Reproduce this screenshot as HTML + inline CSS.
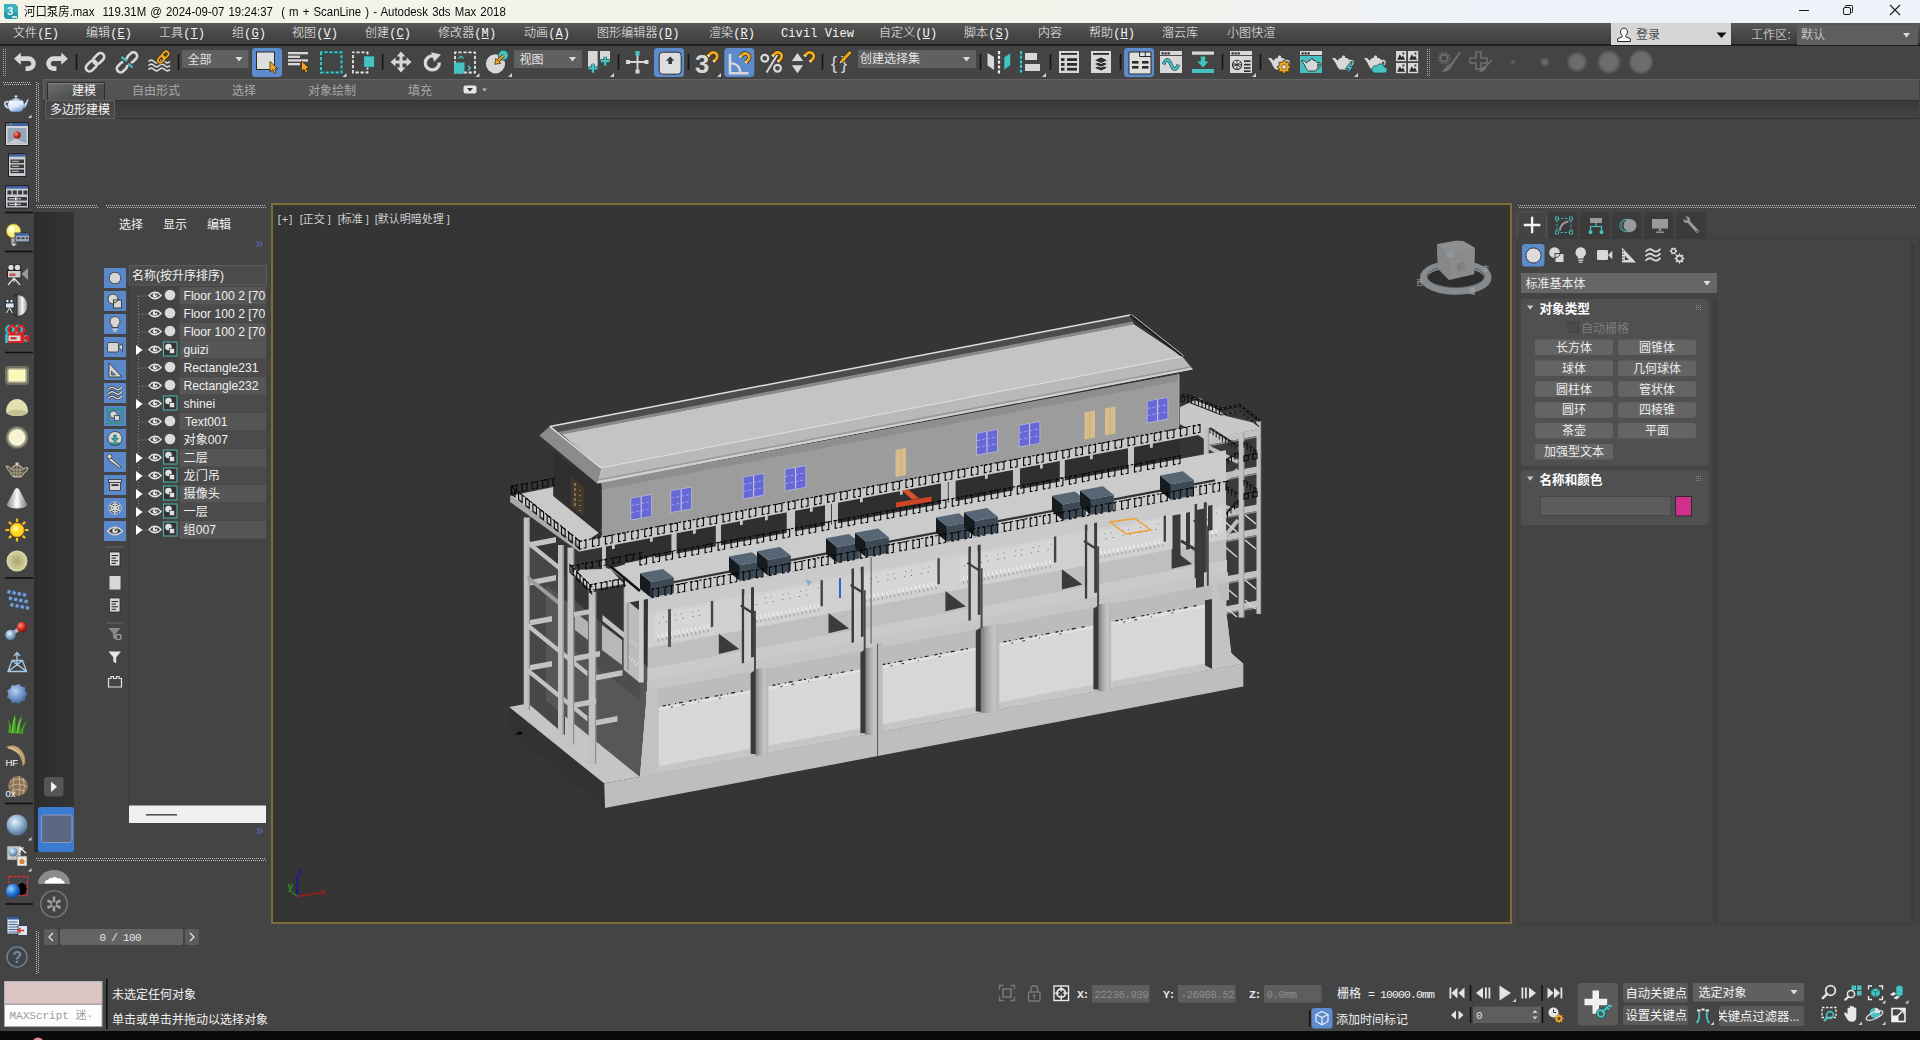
<!DOCTYPE html>
<html lang="zh-CN"><head><meta charset="utf-8"><title>河口泵房.max - Autodesk 3ds Max 2018</title>
<style>
*{box-sizing:border-box;margin:0;padding:0}
html,body{width:1920px;height:1040px;overflow:hidden;background:#444;}
body{position:relative;font-family:"Liberation Sans","Noto Sans CJK SC",sans-serif;font-size:12px;color:#e6e6e6;line-height:1}
.a{position:absolute}
.t{position:absolute;white-space:nowrap}
svg{position:absolute;overflow:visible}
#title{left:0;top:0;width:1920px;height:23px;background:linear-gradient(90deg,#f3f3e8 0%,#f3f3ea 50%,#f2f2ee 62%,#eef2f8 77%,#eff3f9 100%);color:#111}
#menu{left:0;top:23px;width:1920px;height:23px;background:linear-gradient(180deg,#585858 0%,#4a4a4a 45%,#3d3d3d 100%);border-bottom:2px solid #1e1e1e}
#menu .t{top:5px;font-size:12px;color:#f4f4f4;letter-spacing:.1px;font-weight:300}
.mono{font-family:"Liberation Mono","Noto Sans CJK SC",monospace}
.dots-h{height:3px;background:repeating-linear-gradient(90deg,#bdbdbd 0 1px,transparent 1px 2px) 0 0/100% 1px no-repeat,repeating-linear-gradient(90deg,transparent 0 1px,#bdbdbd 1px 2px) 0 2px/100% 1px no-repeat}
.dots-v{width:3px;background:repeating-linear-gradient(180deg,#bdbdbd 0 1px,transparent 1px 2px) 0 0/1px 100% no-repeat,repeating-linear-gradient(180deg,transparent 0 1px,#bdbdbd 1px 2px) 2px 0/1px 100% no-repeat}
</style></head><body>
<!-- TITLE BAR -->
<div id="title" class="a">
<svg style="left:3px;top:3px" width="16" height="17" viewBox="0 0 16 17"><path d="M1 1h11l3 3v11l-2 1H3l-2-2z" fill="#2a9aa6"/><path d="M1 1h11l3 3v5H1z" fill="#3bb3be"/><text x="4" y="11.5" font-family="Liberation Sans,sans-serif" font-weight="bold" font-size="11" fill="#e8f6f8">3</text><rect x="9" y="13" width="5" height="2" fill="#bfe6ea"/></svg>
<div class="t" id="ttl" style="left:24px;top:6px;font-size:12px;color:#0a0a0a;word-spacing:1px;transform:scaleX(.951);transform-origin:0 0">河口泵房.max&nbsp; 119.31M @ 2024-09-07 19:24:37&nbsp; ( m + ScanLine ) - Autodesk 3ds Max 2018</div>
<svg style="left:1797px;top:4px" width="110" height="14" viewBox="0 0 110 14" fill="none" stroke="#1a1a1a" stroke-width="1"><path d="M2 6.5h10"/><rect x="46.5" y="3.5" width="7" height="7" rx="1.5"/><path d="M48.5 3.5v-1.2q0-.8.8-.8h5.4q.8 0 .8.8v5.4q0 .8-.8.8h-1.2"/><path d="M93 1l10 10M103 1l-10 10" stroke-width="1.1"/></svg>
</div>
<!-- MENU BAR -->
<div id="menu" class="a mono">
<div class="t" style="left:13px">文件(<u>F</u>)</div>
<div class="t" style="left:86px">编辑(<u>E</u>)</div>
<div class="t" style="left:159px">工具(<u>T</u>)</div>
<div class="t" style="left:232px">组(<u>G</u>)</div>
<div class="t" style="left:292px">视图(<u>V</u>)</div>
<div class="t" style="left:365px">创建(<u>C</u>)</div>
<div class="t" style="left:438px">修改器(<u>M</u>)</div>
<div class="t" style="left:524px">动画(<u>A</u>)</div>
<div class="t" style="left:597px">图形编辑器(<u>D</u>)</div>
<div class="t" style="left:709px">渲染(<u>R</u>)</div>
<div class="t" style="left:781px">Civil View</div>
<div class="t" style="left:879px">自定义(<u>U</u>)</div>
<div class="t" style="left:964px">脚本(<u>S</u>)</div>
<div class="t" style="left:1038px">内容</div>
<div class="t" style="left:1089px">帮助(<u>H</u>)</div>
<div class="t" style="left:1162px">溜云库</div>
<div class="t" style="left:1227px">小图快渲</div>
<div class="a" style="left:1611px;top:0;width:120px;height:22px;background:#d6d6d6"></div>
<svg style="left:1615px;top:4px" width="18" height="16" viewBox="0 0 18 16"><path d="M9 1.2c2.2 0 3.4 1.6 3.4 3.8 0 1.6-.7 3-1.6 3.7v1.1l4.6 2v2.7H2.600v-2.700l4.600-2v-1.100C6.300 8 5.600 6.600 5.600 5 5.600 2.800 6.800 1.200 9 1.200z" fill="#fff" stroke="#222" stroke-width="1"/></svg>
<div class="t" style="left:1636px;top:6px;color:#000;font-family:'Liberation Sans','Noto Sans CJK SC',sans-serif">登录</div>
<svg style="left:1716px;top:9px" width="12" height="7"><path d="M0.500 0.500h10l-5 5.500z" fill="#111"/></svg>
<div class="t" style="left:1751px;top:6px;font-family:'Liberation Sans','Noto Sans CJK SC',sans-serif;color:#e8e8e8">工作区:</div>
<div class="a" style="left:1797px;top:2px;width:121px;height:20px;background:#5e5e5e"></div>
<div class="t" style="left:1801px;top:6px;font-family:'Liberation Sans','Noto Sans CJK SC',sans-serif;color:#e0e0e0">默认</div>
<svg style="left:1903px;top:10px" width="8" height="5"><path d="M0 0h7l-3.500 4.500z" fill="#ddd"/></svg>
</div>
<!-- MAIN TOOLBAR -->
<div id="tb" class="a" style="left:0;top:46px;width:1920px;height:33px;background:#444"></div>
<!-- RIBBON -->
<div class="a" style="left:43px;top:79px;width:1876px;height:21px;background:#535353;border-top:1px solid #626262;border-left:1px solid #626262"></div>
<div class="a" style="left:43px;top:100px;width:1876px;height:19px;background:linear-gradient(180deg,#3a3a3a,#434343);border-top:1px solid #2e2e2e;border-bottom:1px solid #333"></div>
<div class="a" style="left:47px;top:82px;width:58px;height:18px;background:linear-gradient(160deg,#6e6e6e,#4c4c4c 70%);border:1px solid #2c2c2c;border-bottom:none;border-radius:2px 2px 0 0;box-shadow:inset 0 1px 0 #808080"></div>
<div class="t" style="left:72px;top:85px;color:#f0f0f0">建模</div>
<div class="t" style="left:132px;top:85px;color:#a8a8a8">自由形式</div>
<div class="t" style="left:232px;top:85px;color:#a8a8a8">选择</div>
<div class="t" style="left:308px;top:85px;color:#a8a8a8">对象绘制</div>
<div class="t" style="left:408px;top:85px;color:#a8a8a8">填充</div>
<svg style="left:463px;top:85px" width="26" height="10"><rect x="0.500" y="0.500" width="13" height="8" rx="2" fill="#e6e6e6"/><path d="M4 3h6l-3 3.500z" fill="#333"/><path d="M19 3.500h5l-2.500 3z" fill="#bbb"/></svg>
<div class="a" style="left:45px;top:100px;width:70px;height:19px;background:#484848;border:1px solid #5e5e5e"></div>
<div class="t" style="left:50px;top:104px;color:#f4f4f4">多边形建模</div>
<svg style="left:0;top:44px" width="1920" height="38" viewBox="0 44 1920 38">
<defs>
<path id="tp" d="M0,3.500 L3.200,3.500 L5.600,6.200 C6.200,4.600 8,3.400 10,3.200 L10,2 C10,0.800 13,0.800 13,2 L13,3.200 C15.400,3.400 17,4.600 17.600,5.800 C20,4.600 22.200,6 21.700,8.600 C21.200,11 19.200,12 17.600,12 C17.100,13.500 16.200,14.500 15.200,15 L7.600,15 C5.600,13.500 4.600,11 3.600,8.600 Z M18,7.200 C18.300,8.500 18.300,9.500 18,10.600 C19.600,10.400 20.600,9.200 20.500,8 C20.400,7 19.200,6.700 18,7.200Z" fill-rule="evenodd"/>
<g id="mag"><path d="M6.400,11.200 L9.300,8.300 A3.900,3.900 0 0 0 3.800,2.800 L0.900,5.700" fill="none" stroke="#3a2a08" stroke-width="4.200"/><path d="M6.400,11.200 L9.300,8.300 A3.900,3.900 0 0 0 3.800,2.800 L0.900,5.700" fill="none" stroke="#f2a922" stroke-width="2.800"/><path d="M6.400,11.200 l0.900,-0.900 M0.900,5.700 l0.900,-0.900" stroke="#f6e6c0" stroke-width="2.800"/></g>
<path id="cur" d="M0,0 L0,10.500 L2.600,8.200 L4.400,12 L6.400,11.100 L4.600,7.400 L8,7.400 Z" fill="#f2a922" stroke="#3a2a08" stroke-width="0.800"/>
<path id="fly" d="M4,0 V4 H0 Z" fill="#d0d0d0"/>
<filter id="bl1"><feGaussianBlur stdDeviation="0.800"/></filter><filter id="bl2"><feGaussianBlur stdDeviation="1.600"/></filter>
</defs>
<line x1="3.5" y1="49" x2="3.5" y2="76" stroke="#a0a0a0" stroke-width="1" stroke-dasharray="1 1"/>
<line x1="5.5" y1="49" x2="5.5" y2="76" stroke="#a0a0a0" stroke-width="1" stroke-dasharray="1 1"/>
<rect x="75.7" y="54" width="1.600" height="16" fill="#151515"/>
<rect x="177.7" y="54" width="1.600" height="16" fill="#151515"/>
<rect x="381.8" y="54" width="1.600" height="16" fill="#151515"/>
<rect x="617.7" y="54" width="1.600" height="16" fill="#151515"/>
<rect x="687.7" y="54" width="1.600" height="16" fill="#151515"/>
<rect x="821.7" y="54" width="1.600" height="16" fill="#151515"/>
<rect x="979.7" y="54" width="1.600" height="16" fill="#151515"/>
<rect x="1049.7" y="54" width="1.600" height="16" fill="#151515"/>
<rect x="1119.7" y="54" width="1.600" height="16" fill="#151515"/>
<rect x="1221.7" y="54" width="1.600" height="16" fill="#151515"/>
<rect x="1259.7" y="54" width="1.600" height="16" fill="#151515"/>
<path d="M20.200,58.600 H28.500 A5,5 0 0 1 28.500,68.600 H25.600" fill="none" stroke="#d8d8d8" stroke-width="4.600"/><path d="M14,58.700 L20.800,52.600 V64.800 Z" fill="#d8d8d8"/>
<path d="M61.800,58.600 H53.500 A5,5 0 0 0 53.500,68.600 H56.400" fill="none" stroke="#d8d8d8" stroke-width="4.600"/><path d="M68,58.700 L61.200,52.600 V64.800 Z" fill="#d8d8d8"/>
<rect x="85.05" y="62.25" width="12.5" height="7.5" rx="3.75" fill="none" stroke="#d8d8d8" stroke-width="2.6" transform="rotate(-45 91.3 66)"/>
<rect x="92.45" y="54.85" width="12.5" height="7.5" rx="3.75" fill="none" stroke="#d8d8d8" stroke-width="2.6" transform="rotate(-45 98.7 58.6)"/>
<rect x="116.25" y="63.45" width="11.5" height="7.5" rx="3.75" fill="none" stroke="#d8d8d8" stroke-width="2.6" transform="rotate(-45 122 67.2)"/>
<rect x="126.25" y="53.65" width="11.5" height="7.5" rx="3.75" fill="none" stroke="#d8d8d8" stroke-width="2.6" transform="rotate(-45 132 57.4)"/>
<path d="M123.500,63 L130.500,61.500" stroke="#444" stroke-width="5"/>
<path d="M121.500,57 L127,61 M128,63.500 L132.500,67.500" stroke="#46c2c2" stroke-width="2.200"/>
<path d="M148.500,61.5 q2.700,-2.600 5.400,0 t5.400,0 t5.400,0 t5.300,0" fill="none" stroke="#d8d8d8" stroke-width="1.700"/>
<path d="M148.500,65.5 q2.700,-2.600 5.400,0 t5.400,0 t5.400,0 t5.300,0" fill="none" stroke="#d8d8d8" stroke-width="1.700"/>
<path d="M148.500,69.5 q2.700,-2.600 5.400,0 t5.400,0 t5.400,0 t5.300,0" fill="none" stroke="#d8d8d8" stroke-width="1.700"/>
<rect x="157.45" y="56.7" width="7.5" height="5" rx="2.5" fill="none" stroke="#3a2a08" stroke-width="3.4" transform="rotate(-45 161.2 59.2)"/>
<rect x="161.55" y="52.3" width="7.5" height="5" rx="2.5" fill="none" stroke="#3a2a08" stroke-width="3.4" transform="rotate(-45 165.3 54.8)"/>
<rect x="157.45" y="56.7" width="7.5" height="5" rx="2.5" fill="none" stroke="#f2a922" stroke-width="1.8" transform="rotate(-45 161.2 59.2)"/>
<rect x="161.55" y="52.3" width="7.5" height="5" rx="2.5" fill="none" stroke="#f2a922" stroke-width="1.8" transform="rotate(-45 165.3 54.8)"/>
<rect x="182" y="50" width="66.5" height="18" fill="#606060"/>
<text x="187.5" y="63.5" font-size="12" fill="#e4e4e4" font-family="Liberation Sans,Noto Sans CJK SC,sans-serif">全部</text>
<path d="M235.5,57 h7 l-3.500,4.500 z" fill="#dcdcdc"/>
<rect x="514" y="50" width="68" height="18" fill="#606060"/>
<text x="519.5" y="63.5" font-size="12" fill="#e4e4e4" font-family="Liberation Sans,Noto Sans CJK SC,sans-serif">视图</text>
<path d="M569.0,57 h7 l-3.500,4.500 z" fill="#dcdcdc"/>
<rect x="858" y="50" width="118" height="18" fill="#606060"/>
<text x="860" y="62.5" font-size="12" fill="#e4e4e4" font-family="Liberation Sans,Noto Sans CJK SC,sans-serif">创建选择集</text>
<path d="M963.0,57 h7 l-3.500,4.500 z" fill="#dcdcdc"/>
<rect x="252" y="48" width="30" height="29" rx="3.500" fill="#5d8ccc"/>
<rect x="654" y="48" width="30" height="29" rx="3.500" fill="#5d8ccc"/>
<rect x="724.3" y="48" width="30" height="29" rx="3.500" fill="#5d8ccc"/>
<rect x="1124" y="48" width="30" height="29" rx="3.500" fill="#5d8ccc"/>
<rect x="256.500" y="52" width="18" height="17.500" fill="#dedede" stroke="#2b2b2b" stroke-width="1"/><use href="#cur" x="270" y="61.500"/>
<rect x="288" y="52" width="20" height="2.300" fill="#d8d8d8"/>
<rect x="288" y="55.6" width="12" height="2.300" fill="#d8d8d8"/>
<rect x="288" y="59.3" width="20" height="2.300" fill="#d8d8d8"/>
<rect x="288" y="63" width="12" height="2.300" fill="#d8d8d8"/>
<use href="#cur" x="301.500" y="61"/>
<rect x="321" y="52.300" width="20.500" height="20.200" fill="none" stroke="#1f4f4f" stroke-width="3"/><rect x="321" y="52.300" width="20.500" height="20.200" fill="none" stroke="#46c2c2" stroke-width="2" stroke-dasharray="3.200 1.800" stroke-dashoffset="1.600"/>
<use href="#fly" x="342.500" y="73"/>
<rect x="353" y="52.300" width="14.500" height="20.200" fill="none" stroke="#e6e6e6" stroke-width="1.800" stroke-dasharray="3.200 1.800" stroke-dashoffset="1.600"/><rect x="363.800" y="56" width="10.600" height="11.200" fill="#46c2c2" stroke="#245" stroke-width="0.600"/>
<path d="M401,51.500 l4.400,5 h-2.900 v4 h4 v-2.900 l5,4.400 l-5,4.400 v-2.900 h-4 v4 h2.900 l-4.400,5 l-4.400,-5 h2.900 v-4 h-4 v2.900 l-5,-4.400 l5,-4.400 v2.900 h4 v-4 h-2.900 z" fill="#d8d8d8"/>
<path d="M439.300,62.500 A7,7 0 1 1 433.500,56" fill="none" stroke="#d8d8d8" stroke-width="3.300"/><path d="M432.500,50.800 L441.200,56.200 L432.500,61 Z" fill="#d8d8d8" transform="rotate(-18 436 56)"/>
<rect x="455" y="52.300" width="20" height="20.200" fill="none" stroke="#e6e6e6" stroke-width="1.800" stroke-dasharray="3.200 1.800" stroke-dashoffset="1.600"/><rect x="454" y="62.500" width="10.500" height="11" fill="#46c2c2"/><path d="M458.500,58.500 l2.500,-2.300 l2.500,2.300 M468,65.500 l2.300,2.500 l-2.300,2.500" stroke="#46c2c2" stroke-width="1.400" fill="none"/>
<use href="#fly" x="475.500" y="73"/>
<circle cx="495.500" cy="63.800" r="9.600" fill="#d8d8d8"/><circle cx="503.300" cy="55.200" r="5" fill="#46c2c2" stroke="#1f4f4f" stroke-width="0.800"/><path d="M503.500,55.500 L497.500,61.500" stroke="#3a2a08" stroke-width="3.200"/><path d="M503.500,55.500 L497.500,61.500" stroke="#f2a922" stroke-width="2"/><path d="M494.800,64.300 L495.800,58.300 L500.800,63.300 Z" fill="#f2a922" stroke="#3a2a08" stroke-width="0.700"/>
<use href="#fly" x="508" y="73"/>
<rect x="588" y="51" width="9.600" height="16" fill="#d8d8d8"/><rect x="600" y="51" width="10" height="8.500" fill="#d8d8d8"/><path d="M588.5,68.3 h9.0 M593,63.8 v9.0" stroke="#1f4f4f" stroke-width="3.4000000000000004"/><path d="M588.5,68.3 h9.0 M593,63.8 v9.0" stroke="#46c2c2" stroke-width="2.2"/><path d="M600.7,61.2 h9.0 M605.2,56.7 v9.0" stroke="#1f4f4f" stroke-width="3.4000000000000004"/><path d="M600.7,61.2 h9.0 M605.2,56.7 v9.0" stroke="#46c2c2" stroke-width="2.2"/>
<use href="#fly" x="610" y="73"/>
<path d="M627,62 h21 M637.500,52.500 v20" stroke="#d8d8d8" stroke-width="1.800"/><rect x="626" y="60" width="4" height="4" fill="#d8d8d8"/><rect x="644.500" y="60" width="4" height="4" fill="#d8d8d8"/><rect x="635.500" y="69.500" width="4" height="4" fill="#d8d8d8"/><rect x="635.300" y="51" width="4.400" height="4.400" fill="#46c2c2"/>
<rect x="659.200" y="52.200" width="22" height="22" rx="3.500" fill="#dedede" stroke="#2b2b2b" stroke-width="1"/><path d="M670.200,56.500 l4.300,4.300 h-2.500 v3.200 h-3.600 v-3.200 h-2.500 z" fill="#3a3a3a"/>
<text x="695" y="72.800" font-family="Liberation Sans,sans-serif" font-weight="bold" font-size="25.500" fill="#d8d8d8">3</text><use href="#mag" x="707" y="50.500"/><use href="#fly" x="717" y="73"/>
<path d="M730,54 V73.200 H748.500" fill="none" stroke="#d8d8d8" stroke-width="2.600"/><path d="M731,63.300 A9,9 0 0 1 740.300,72.500" fill="none" stroke="#d8d8d8" stroke-width="2.200"/><use href="#mag" x="739" y="51.500"/>
<circle cx="764.800" cy="58.300" r="3.400" fill="none" stroke="#d8d8d8" stroke-width="2.200"/><circle cx="777.500" cy="68.300" r="3.400" fill="none" stroke="#d8d8d8" stroke-width="2.200"/><path d="M766.500,72.500 L777.500,54.500" stroke="#d8d8d8" stroke-width="2"/><use href="#mag" x="771.500" y="50.500"/>
<path d="M797.500,53 l5.600,8 h-11.200 z M797.500,73.300 l5.600,-8 h-11.200 z" fill="#d8d8d8"/><use href="#mag" x="803.500" y="50.500"/>
<text x="831" y="68.500" font-family="Liberation Sans,sans-serif" font-size="18" fill="#d8d8d8">{</text><text x="841" y="68.500" font-family="Liberation Sans,sans-serif" font-size="18" fill="#d8d8d8">}</text><path d="M840.500,62.500 L850.500,52" stroke="#3a2a08" stroke-width="4"/><path d="M841.500,61.500 L850.500,52" stroke="#f2a922" stroke-width="2.800"/><path d="M839.800,63.300 l0.600,-2.600 l2,2 z" fill="#f5d9a0"/>
<path d="M987.500,53 L994,57 V70 L987.500,65.500 Z" fill="#d8d8d8"/><path d="M1010.500,53 L1004,57 V70 L1010.500,65.500 Z" fill="#46c2c2" stroke="#1f4f4f" stroke-width="0.600"/><path d="M999,51 V73.500" stroke="#eee" stroke-width="2.200" stroke-dasharray="3.200 1.600"/>
<path d="M1021,51 V73.500" stroke="#1f4f4f" stroke-width="3.200"/><path d="M1021,51 V73.500" stroke="#46c2c2" stroke-width="2.200" stroke-dasharray="3.200 1.400"/><rect x="1025" y="53" width="12" height="7" fill="#d8d8d8"/><rect x="1025" y="64" width="15" height="7" fill="#d8d8d8"/><use href="#fly" x="1042" y="73"/>
<rect x="1059" y="51" width="20" height="22" fill="#d8d8d8"/><rect x="1061" y="53" width="16" height="1.800" fill="#2b2b2b"/>
<rect x="1061" y="58.2" width="3.500" height="2.800" fill="#2b2b2b"/><rect x="1067" y="58.2" width="10" height="2.800" fill="#2b2b2b"/>
<rect x="1061" y="63" width="3.500" height="2.800" fill="#2b2b2b"/><rect x="1067" y="63" width="10" height="2.800" fill="#2b2b2b"/>
<rect x="1061" y="67.8" width="3.500" height="2.800" fill="#2b2b2b"/><rect x="1067" y="67.8" width="10" height="2.800" fill="#2b2b2b"/>
<rect x="1091" y="51" width="20" height="22" fill="#d8d8d8"/><rect x="1093" y="53" width="16" height="1.800" fill="#2b2b2b"/>
<path d="M1101,64.5 l7,3.300 l-7,3.300 l-7,-3.300 z" fill="#2b2b2b" stroke="#d8d8d8" stroke-width="1"/>
<path d="M1101,60.7 l7,3.300 l-7,3.300 l-7,-3.300 z" fill="#2b2b2b" stroke="#d8d8d8" stroke-width="1"/>
<path d="M1101,56.900000000000006 l7,3.300 l-7,3.300 l-7,-3.300 z" fill="#2b2b2b" stroke="#d8d8d8" stroke-width="1"/>
<path d="M1129,52 H1151 V74 H1129 Z" fill="#dedede" stroke="#2b2b2b" stroke-width="1"/><path d="M1139.500,52 V56.500 H1151 M1145.300,52 V56.500" stroke="#2b2b2b" stroke-width="1" fill="none"/>
<rect x="1132" y="61" width="6.500" height="2.600" fill="#2b2b2b"/>
<rect x="1132" y="66" width="6.500" height="2.600" fill="#2b2b2b"/>
<rect x="1142" y="61" width="6.500" height="2.600" fill="#2b2b2b"/>
<rect x="1142" y="66" width="6.500" height="2.600" fill="#2b2b2b"/>
<rect x="1160" y="51" width="22" height="22" fill="#d8d8d8"/><rect x="1160" y="51" width="22" height="4.500" fill="#d8d8d8"/><rect x="1160" y="55.200" width="22" height="0.800" fill="#2b2b2b"/>
<rect x="1161.5" y="52.300" width="2.200" height="2.200" fill="#2b2b2b"/>
<rect x="1164.5" y="52.300" width="2.200" height="2.200" fill="#2b2b2b"/>
<rect x="1167.5" y="52.300" width="2.200" height="2.200" fill="#2b2b2b"/>
<path d="M1163.500,64.500 c2.500,-6 5,-6 7.500,0 s5,6 7.500,0" fill="none" stroke="#1f4f4f" stroke-width="3.400"/><path d="M1163.500,64.500 c2.500,-6 5,-6 7.500,0 s5,6 7.500,0" fill="none" stroke="#46c2c2" stroke-width="2"/>
<rect x="1192" y="51.500" width="22" height="3.200" fill="#d8d8d8"/><rect x="1192" y="69" width="22" height="4" fill="#46c2c2"/><path d="M1200.800,56.500 h4.400 v5 h3.300 l-5.500,6 l-5.500,-6 h3.300 z" fill="#46c2c2"/>
<rect x="1230" y="51" width="22" height="22" fill="#d8d8d8"/><rect x="1230" y="51" width="22" height="4.500" fill="#d8d8d8"/><rect x="1230" y="55.200" width="22" height="0.800" fill="#2b2b2b"/>
<rect x="1231.5" y="52.300" width="2.200" height="2.200" fill="#2b2b2b"/>
<rect x="1234.5" y="52.300" width="2.200" height="2.200" fill="#2b2b2b"/>
<rect x="1237.5" y="52.300" width="2.200" height="2.200" fill="#2b2b2b"/>
<circle cx="1237" cy="64.800" r="4.600" fill="#f2f2f2" stroke="#2b2b2b" stroke-width="1.100"/><path d="M1233,62.500 l8,5 M1233,67 l8,-5 M1237,60.300 v9.200 M1232.500,64.800 h9.200" stroke="#2b2b2b" stroke-width="0.900"/>
<rect x="1244" y="60.3" width="6.500" height="1.600" fill="#2b2b2b"/>
<rect x="1244" y="63.8" width="6.500" height="1.600" fill="#2b2b2b"/>
<rect x="1244" y="67.2" width="6.500" height="1.600" fill="#2b2b2b"/>
<rect x="1244" y="70.4" width="6.500" height="1.600" fill="#2b2b2b"/>
<use href="#fly" x="1252" y="73"/>
<use href="#tp" x="1268" y="54.500" fill="#d8d8d8"/>
<polygon points="1290.6,66.3 1290.6,67.7 1288.8,68.4 1288.4,69.4 1289.2,71.1 1288.1,72.2 1286.4,71.4 1285.4,71.8 1284.7,73.6 1283.3,73.6 1282.6,71.8 1281.6,71.4 1279.9,72.2 1278.8,71.1 1279.6,69.4 1279.2,68.4 1277.4,67.7 1277.4,66.3 1279.2,65.6 1279.6,64.6 1278.8,62.9 1279.9,61.8 1281.6,62.6 1282.6,62.2 1283.3,60.4 1284.7,60.4 1285.4,62.2 1286.4,62.6 1288.1,61.8 1289.2,62.9 1288.4,64.6 1288.8,65.6" fill="#f2a922" stroke="#3a2a08" stroke-width="0.800"/><circle cx="1284" cy="67" r="2.300" fill="#e8e8e8" stroke="#3a2a08" stroke-width="0.600"/>
<rect x="1300" y="51" width="22" height="22" fill="#46c2c2"/><rect x="1300" y="51" width="22" height="4.500" fill="#d8d8d8"/><rect x="1300" y="55.200" width="22" height="0.800" fill="#2b2b2b"/>
<rect x="1301.5" y="52.300" width="2.200" height="2.200" fill="#2b2b2b"/>
<rect x="1304.5" y="52.300" width="2.200" height="2.200" fill="#2b2b2b"/>
<rect x="1307.5" y="52.300" width="2.200" height="2.200" fill="#2b2b2b"/>
<use href="#tp" x="1301.500" y="57.500" fill="#d8d8d8" stroke="#2b2b2b" stroke-width="1" transform="translate(1301.500 57.500) scale(0.9) translate(-1301.500 -57.500)"/>
<use href="#tp" x="1332" y="54.500" fill="#d8d8d8"/><path d="M1351,61.500 l-5.500,7 h3.200 l-1.800,6 l6.300,-8 h-3.300 l2.600,-5 z" fill="#46c2c2" stroke="#1f4f4f" stroke-width="0.800"/><use href="#fly" x="1354" y="73"/>
<use href="#tp" x="1364" y="54.500" fill="#d8d8d8"/><path d="M1374.500,73 h9.500 a3,3 0 0 0 0.300,-6 a4,4 0 0 0 -7.500,-1 a3.600,3.600 0 0 0 -2.300,7 z" fill="#46c2c2" stroke="#1f4f4f" stroke-width="0.800"/>
<rect x="1396" y="51" width="10.200" height="10.200" fill="#d8d8d8"/><path d="M1397.2,59.8 l2.600,-5.500 l1.800,3 l1.400,-1.800 l2,4.300 z" fill="#2b2b2b"/><rect x="1402.5" y="52.6" width="1.800" height="1.800" fill="#2b2b2b"/>
<rect x="1396" y="63" width="10.200" height="10.200" fill="#d8d8d8"/><path d="M1397.2,71.8 l2.600,-5.500 l1.800,3 l1.400,-1.800 l2,4.300 z" fill="#2b2b2b"/><rect x="1402.5" y="64.6" width="1.800" height="1.800" fill="#2b2b2b"/>
<rect x="1408" y="51" width="10.200" height="10.200" fill="#d8d8d8"/><path d="M1409.2,59.8 l2.600,-5.500 l1.800,3 l1.400,-1.800 l2,4.300 z" fill="#2b2b2b"/><rect x="1414.5" y="52.6" width="1.800" height="1.800" fill="#2b2b2b"/>
<rect x="1408" y="63" width="10.200" height="10.200" fill="#d8d8d8"/><path d="M1409.2,71.8 l2.600,-5.500 l1.800,3 l1.400,-1.800 l2,4.300 z" fill="#2b2b2b"/><rect x="1414.5" y="64.6" width="1.800" height="1.800" fill="#2b2b2b"/>
<line x1="1427.5" y1="49" x2="1427.5" y2="76" stroke="#a0a0a0" stroke-width="1" stroke-dasharray="1 1"/>
<line x1="1429.5" y1="49" x2="1429.5" y2="76" stroke="#a0a0a0" stroke-width="1" stroke-dasharray="1 1"/>
<circle cx="1444" cy="58" r="3.600" fill="none" stroke="#6e6e6e" stroke-width="2"/><circle cx="1444" cy="58" r="5.600" fill="none" stroke="#6e6e6e" stroke-width="1.400" stroke-dasharray="1.800 1.600"/><path d="M1459.500,51.500 L1450,64 l-3,1.500 q-2.500,2 -5,6.500 q5,0.500 8.500,-3 l1.500,-3 L1460.500,53 z" fill="#6e6e6e"/>
<path d="M1476,52 h5 v6 h6 v5 h-6 v6 h-5 v-6 h-6 v-5 h6 z" fill="none" stroke="#6e6e6e" stroke-width="1.600"/><path d="M1491.500,59 L1485,66 l-2.500,1 q-2,1.500 -3.500,5 q4,0.300 6.500,-2.300 l1,-2.400 L1492.500,60 z" fill="#6e6e6e"/>
<circle cx="1513" cy="62" r="1.8" fill="#6c6c6c" filter="url(#bl1)"/>
<circle cx="1545" cy="62" r="3.6" fill="#6c6c6c" filter="url(#bl1)"/>
<circle cx="1577" cy="62" r="9" fill="#6c6c6c" filter="url(#bl2)"/>
<circle cx="1609" cy="62" r="10.5" fill="#6c6c6c" filter="url(#bl2)"/>
<circle cx="1641" cy="62" r="11" fill="#6c6c6c" filter="url(#bl1)"/>
</svg>
<!-- left dotted grips -->
<div class="a dots-h" style="left:3px;top:82px;width:28px"></div>
<div class="a dots-v" style="left:36px;top:82px;height:120px"></div>
<div class="a dots-h" style="left:36px;top:205px;width:62px"></div>
<div class="a dots-h" style="left:106px;top:205px;width:160px"></div>
<div class="a dots-h" style="left:36px;top:858px;width:230px"></div>
<div class="a dots-v" style="left:36px;top:931px;height:43px"></div>
<!-- dark strip -->
<div class="a" style="left:34px;top:212px;width:40px;height:640px;background:linear-gradient(90deg,#2c2c2c,#343434)"></div>
<!-- viewport -->
<div id="vp" class="a" style="left:271px;top:203px;width:1241px;height:721px;background:#353535;border:2px solid #7c6d3b;box-shadow:inset 0 0 0 1px #3b3623"></div>
<div class="t" style="left:277.800px;top:214px;font-size:11px;color:#d0d0d0;letter-spacing:1px">[+]</div>
<div class="t" style="left:299.700px;top:214px;font-size:11px;color:#d0d0d0">[正交 ]</div>
<div class="t" style="left:337.700px;top:214px;font-size:11px;color:#d0d0d0">[标准 ]</div>
<div class="t" style="left:374.700px;top:214px;font-size:11px;color:#d0d0d0">[默认明暗处理 ]</div>
<!-- command panel -->
<div class="a" style="left:1517px;top:238px;width:402px;height:686px;background:#444;border:1px solid #3a3a3a;border-radius:0 0 3px 3px"></div>
<div class="a dots-h" style="left:1518px;top:205px;width:398px"></div>
<!-- bottom black strip -->
<div class="a" style="left:0;top:1031px;width:1920px;height:9px;background:#0a0a0a"></div>
<svg style="left:0;top:0" width="1920" height="1040" viewBox="0 0 1920 1040" shape-rendering="auto">
<defs><linearGradient id="cyl" x1="0" x2="1" y1="0" y2="0"><stop offset="0" stop-color="#7d7d7d"/><stop offset="0.350" stop-color="#a8a8a8"/><stop offset="0.750" stop-color="#c6c6c6"/><stop offset="1" stop-color="#b4b4b4"/></linearGradient></defs>
<polygon points="509.2,706.9 604.3,783.6 605.0,807.9 509.2,731.0" fill="#323232" />
<polygon points="509.2,706.9 604.3,783.6 1243.3,663.6 1148.2,586.9" fill="#c5c5c5" />
<polygon points="604.3,783.6 1243.3,663.6 1243.3,686.5 605.0,807.9" fill="#bebebe" />
<polygon points="530.0,545.0 565.0,575.0 565.0,735.0 530.0,705.0" fill="#474747" />
<polygon points="546.0,585.0 648.0,667.0 647.5,686.7 640.0,777.0 546.0,701.0" fill="#575757" />
<polygon points="574.0,600.0 640.0,655.0 640.0,700.0 574.0,650.0" fill="#4d4d4d" />
<polygon points="575.0,612.0 588.0,622.0 588.0,640.0 575.0,630.0" fill="#b4b4b4" />
<polygon points="602.0,625.0 622.0,640.0 622.0,665.0 602.0,650.0" fill="#b8b8b8" />
<polygon points="624.0,598.0 640.0,611.0 640.0,683.0 624.0,670.0" fill="#bcbcbc" />
<line x1="626.0" y1="640.0" x2="638.0" y2="650.0" stroke="#888" stroke-width="1" stroke-dasharray="1 2"/>
<line x1="626.0" y1="655.0" x2="638.0" y2="665.0" stroke="#e0e0e0" stroke-width="3" stroke-dasharray="1 2.500"/>
<polygon points="523.7,517.5 530.0,517.5 530.0,710.0 523.7,710.0" fill="#c2c2c2" />
<line x1="529.4" y1="517.5" x2="529.4" y2="710.0" stroke="#8e8e8e" stroke-width="1.2" />
<polygon points="530.0,542.0 556.0,537.1 556.0,542.6 530.0,547.5" fill="#c2c2c2" />
<polygon points="530.0,580.0 556.0,575.1 556.0,580.6 530.0,585.5" fill="#c2c2c2" />
<polygon points="530.0,620.0 552.0,615.9 552.0,621.4 530.0,625.5" fill="#c2c2c2" />
<polygon points="530.0,665.0 552.0,660.9 552.0,666.4 530.0,670.5" fill="#c2c2c2" />
<polygon points="525.0,537.5 562.5,567.8 562.5,573.3 525.0,543.0" fill="#c2c2c2" />
<polygon points="527.5,622.5 587.5,670.9 587.5,676.4 527.5,628.0" fill="#c2c2c2" />
<polygon points="527.5,667.5 587.5,715.9 587.5,721.4 527.5,673.0" fill="#c2c2c2" />
<polygon points="527.5,575.0 560.0,601.2 560.0,606.2 527.5,580.0" fill="#9c9c9c" />
<polygon points="558.0,545.0 563.7,545.0 563.7,735.0 558.0,735.0" fill="#c2c2c2" />
<line x1="563.1" y1="545.0" x2="563.1" y2="735.0" stroke="#8e8e8e" stroke-width="1.2" />
<polygon points="567.5,547.5 574.2,547.5 574.2,744.6 567.5,744.6" fill="#c2c2c2" />
<line x1="573.6" y1="547.5" x2="573.6" y2="744.6" stroke="#8e8e8e" stroke-width="1.2" />
<polygon points="588.7,590.0 596.2,590.0 596.2,763.5 588.7,763.5" fill="#c2c2c2" />
<line x1="595.6" y1="590.0" x2="595.6" y2="763.5" stroke="#8e8e8e" stroke-width="1.2" />
<polygon points="574.0,656.0 600.0,651.1 600.0,656.6 574.0,661.5" fill="#c2c2c2" />
<polygon points="574.0,702.5 596.0,698.4 596.0,703.9 574.0,708.0" fill="#c2c2c2" />
<polygon points="596.0,675.0 622.5,670.0 622.5,675.5 596.0,680.5" fill="#c2c2c2" />
<polygon points="596.0,720.0 617.5,716.0 617.5,721.5 596.0,725.5" fill="#c2c2c2" />
<polygon points="574.0,612.0 589.0,609.2 589.0,614.2 574.0,617.0" fill="#c2c2c2" />
<polygon points="602.5,615.0 638.7,644.2 638.7,650.2 602.5,621.0" fill="#c2c2c2" />
<polygon points="623.7,587.5 628.7,587.5 628.7,670.0 623.7,670.0" fill="#b9b9b9" />
<line x1="628.1" y1="587.5" x2="628.1" y2="670.0" stroke="#8e8e8e" stroke-width="1.2" />
<polygon points="602.0,542.5 608.0,542.5 608.0,572.0 602.0,572.0" fill="#c2c2c2" />
<line x1="607.4" y1="542.5" x2="607.4" y2="572.0" stroke="#8e8e8e" stroke-width="1.2" />
<polygon points="639.0,595.0 643.7,595.0 643.7,682.5 639.0,682.5" fill="#cdcdcd" />
<polygon points="1204.0,432.0 1226.0,415.0 1261.0,422.0 1261.0,612.0 1240.0,617.0 1204.0,575.0" fill="#3b3b3b" />
<polygon points="1206.0,439.1 1261.0,428.7 1261.0,435.2 1206.0,445.6" fill="#c2c2c2" />
<polygon points="1206.0,445.6 1261.0,435.2 1261.0,436.7 1206.0,447.1" fill="#8a8a8a" />
<polygon points="1206.0,476.1 1261.0,465.7 1261.0,472.2 1206.0,482.6" fill="#c2c2c2" />
<polygon points="1206.0,482.6 1261.0,472.2 1261.0,473.7 1206.0,484.1" fill="#8a8a8a" />
<polygon points="1206.0,514.1 1261.0,503.7 1261.0,510.2 1206.0,520.6" fill="#c2c2c2" />
<polygon points="1206.0,520.6 1261.0,510.2 1261.0,511.7 1206.0,522.1" fill="#8a8a8a" />
<polygon points="1222.0,535.1 1261.0,527.7 1261.0,534.2 1222.0,541.6" fill="#c2c2c2" />
<polygon points="1222.0,541.6 1261.0,534.2 1261.0,535.7 1222.0,543.1" fill="#8a8a8a" />
<polygon points="1222.0,577.1 1261.0,569.7 1261.0,576.2 1222.0,583.6" fill="#c2c2c2" />
<polygon points="1222.0,583.6 1261.0,576.2 1261.0,577.7 1222.0,585.1" fill="#8a8a8a" />
<polygon points="1222.0,607.1 1261.0,599.7 1261.0,606.2 1222.0,613.6" fill="#c2c2c2" />
<polygon points="1222.0,613.6 1261.0,606.2 1261.0,607.7 1222.0,615.1" fill="#8a8a8a" />
<polygon points="1180.0,407.0 1200.0,398.0 1226.0,416.0 1259.0,424.0 1259.0,429.0 1206.0,440.0 1180.0,424.0" fill="#c8c8c8" />
<line x1="1208.0" y1="447.0" x2="1238.0" y2="462.0" stroke="#bdbdbd" stroke-width="4" />
<line x1="1238.0" y1="470.0" x2="1210.0" y2="490.0" stroke="#bdbdbd" stroke-width="4" />
<line x1="1210.0" y1="500.0" x2="1238.0" y2="512.0" stroke="#bdbdbd" stroke-width="4" />
<line x1="1238.0" y1="520.0" x2="1222.0" y2="540.0" stroke="#bdbdbd" stroke-width="4" />
<line x1="1245.0" y1="515.0" x2="1256.0" y2="524.0" stroke="#d4d4d4" stroke-width="1.6" />
<line x1="1224.0" y1="521.0" x2="1237.0" y2="532.0" stroke="#d4d4d4" stroke-width="1.6" />
<line x1="1245.0" y1="540.0" x2="1256.0" y2="549.0" stroke="#d4d4d4" stroke-width="1.6" />
<line x1="1224.0" y1="546.0" x2="1237.0" y2="557.0" stroke="#d4d4d4" stroke-width="1.6" />
<line x1="1245.0" y1="580.0" x2="1256.0" y2="589.0" stroke="#d4d4d4" stroke-width="1.6" />
<line x1="1224.0" y1="586.0" x2="1237.0" y2="597.0" stroke="#d4d4d4" stroke-width="1.6" />
<line x1="1245.0" y1="600.0" x2="1256.0" y2="609.0" stroke="#d4d4d4" stroke-width="1.6" />
<line x1="1224.0" y1="606.0" x2="1237.0" y2="617.0" stroke="#d4d4d4" stroke-width="1.6" />
<polygon points="1203.8,428.0 1208.8,428.0 1208.8,572.0 1203.8,572.0" fill="#c2c2c2" />
<line x1="1208.3" y1="428.0" x2="1208.3" y2="572.0" stroke="#9a9a9a" stroke-width="1" />
<polygon points="1221.0,486.0 1225.5,486.0 1225.5,600.0 1221.0,600.0" fill="#c2c2c2" />
<line x1="1225.0" y1="486.0" x2="1225.0" y2="600.0" stroke="#9a9a9a" stroke-width="1" />
<polygon points="1238.6,432.0 1244.2,432.0 1244.2,617.5 1238.6,617.5" fill="#c2c2c2" />
<line x1="1243.7" y1="432.0" x2="1243.7" y2="617.5" stroke="#9a9a9a" stroke-width="1" />
<polygon points="1256.5,421.0 1261.1,421.0 1261.1,614.0 1256.5,614.0" fill="#c2c2c2" />
<line x1="1260.6" y1="421.0" x2="1260.6" y2="614.0" stroke="#9a9a9a" stroke-width="1" />
<polyline points="1179.5,396.0 1187.0,395.5 1221.5,409.0 1240.0,405.4 1260.0,420.8" fill="none" stroke="#141414" stroke-width="2.8"/>
<polyline points="1179.5,396.0 1187.0,395.5 1221.5,409.0 1240.0,405.4 1260.0,420.8" fill="none" stroke="#9a9a9a" stroke-width="0.600" stroke-dasharray="2 3"/>
<polyline points="1179.5,402.0 1187.0,401.5 1221.5,415.0 1240.0,411.4 1259.0,426.5" fill="none" stroke="#141414" stroke-width="1.2"/>
<polyline points="1179.5,402.0 1187.0,401.5 1221.5,415.0 1240.0,411.4 1259.0,426.5" fill="none" stroke="#9a9a9a" stroke-width="0.600" stroke-dasharray="2 3"/>
<line x1="1181.0" y1="396.0" x2="1181.0" y2="402.0" stroke="#141414" stroke-width="1.1" />
<line x1="1184.5" y1="396.0" x2="1184.5" y2="402.0" stroke="#141414" stroke-width="1.1" />
<line x1="1188.0" y1="396.0" x2="1188.0" y2="402.0" stroke="#141414" stroke-width="1.1" />
<line x1="1191.5" y1="397.4" x2="1191.5" y2="403.4" stroke="#141414" stroke-width="1.1" />
<line x1="1195.0" y1="398.8" x2="1195.0" y2="404.8" stroke="#141414" stroke-width="1.1" />
<line x1="1198.5" y1="400.1" x2="1198.5" y2="406.1" stroke="#141414" stroke-width="1.1" />
<line x1="1202.0" y1="401.5" x2="1202.0" y2="407.5" stroke="#141414" stroke-width="1.1" />
<line x1="1205.5" y1="402.9" x2="1205.5" y2="408.9" stroke="#141414" stroke-width="1.1" />
<line x1="1209.0" y1="404.3" x2="1209.0" y2="410.3" stroke="#141414" stroke-width="1.1" />
<line x1="1212.5" y1="405.7" x2="1212.5" y2="411.7" stroke="#141414" stroke-width="1.1" />
<line x1="1216.0" y1="407.0" x2="1216.0" y2="413.0" stroke="#141414" stroke-width="1.1" />
<line x1="1219.5" y1="408.4" x2="1219.5" y2="414.4" stroke="#141414" stroke-width="1.1" />
<polyline points="1210.0,428.0 1238.0,446.0" fill="none" stroke="#141414" stroke-width="2"/>
<polyline points="1210.0,428.0 1238.0,446.0" fill="none" stroke="#9a9a9a" stroke-width="0.600" stroke-dasharray="2 3"/>
<line x1="1210.0" y1="428.0" x2="1210.0" y2="433.5" stroke="#141414" stroke-width="1" />
<line x1="1213.1" y1="430.0" x2="1213.1" y2="435.5" stroke="#141414" stroke-width="1" />
<line x1="1216.2" y1="432.0" x2="1216.2" y2="437.5" stroke="#141414" stroke-width="1" />
<line x1="1219.3" y1="434.0" x2="1219.3" y2="439.5" stroke="#141414" stroke-width="1" />
<line x1="1222.4" y1="436.0" x2="1222.4" y2="441.5" stroke="#141414" stroke-width="1" />
<line x1="1225.6" y1="438.0" x2="1225.6" y2="443.5" stroke="#141414" stroke-width="1" />
<line x1="1228.7" y1="440.0" x2="1228.7" y2="445.5" stroke="#141414" stroke-width="1" />
<line x1="1231.8" y1="442.0" x2="1231.8" y2="447.5" stroke="#141414" stroke-width="1" />
<line x1="1234.9" y1="444.0" x2="1234.9" y2="449.5" stroke="#141414" stroke-width="1" />
<polyline points="1238.0,452.0 1212.0,470.0" fill="none" stroke="#141414" stroke-width="2"/>
<polyline points="1238.0,452.0 1212.0,470.0" fill="none" stroke="#9a9a9a" stroke-width="0.600" stroke-dasharray="2 3"/>
<line x1="1238.0" y1="452.0" x2="1238.0" y2="457.5" stroke="#141414" stroke-width="1" />
<line x1="1234.8" y1="454.2" x2="1234.8" y2="459.8" stroke="#141414" stroke-width="1" />
<line x1="1231.5" y1="456.5" x2="1231.5" y2="462.0" stroke="#141414" stroke-width="1" />
<line x1="1228.2" y1="458.8" x2="1228.2" y2="464.2" stroke="#141414" stroke-width="1" />
<line x1="1225.0" y1="461.0" x2="1225.0" y2="466.5" stroke="#141414" stroke-width="1" />
<line x1="1221.8" y1="463.2" x2="1221.8" y2="468.8" stroke="#141414" stroke-width="1" />
<line x1="1218.5" y1="465.5" x2="1218.5" y2="471.0" stroke="#141414" stroke-width="1" />
<line x1="1215.2" y1="467.8" x2="1215.2" y2="473.2" stroke="#141414" stroke-width="1" />
<polyline points="1212.0,478.0 1238.0,494.0" fill="none" stroke="#141414" stroke-width="2"/>
<polyline points="1212.0,478.0 1238.0,494.0" fill="none" stroke="#9a9a9a" stroke-width="0.600" stroke-dasharray="2 3"/>
<line x1="1212.0" y1="478.0" x2="1212.0" y2="483.5" stroke="#141414" stroke-width="1" />
<line x1="1215.2" y1="480.0" x2="1215.2" y2="485.5" stroke="#141414" stroke-width="1" />
<line x1="1218.5" y1="482.0" x2="1218.5" y2="487.5" stroke="#141414" stroke-width="1" />
<line x1="1221.8" y1="484.0" x2="1221.8" y2="489.5" stroke="#141414" stroke-width="1" />
<line x1="1225.0" y1="486.0" x2="1225.0" y2="491.5" stroke="#141414" stroke-width="1" />
<line x1="1228.2" y1="488.0" x2="1228.2" y2="493.5" stroke="#141414" stroke-width="1" />
<line x1="1231.5" y1="490.0" x2="1231.5" y2="495.5" stroke="#141414" stroke-width="1" />
<line x1="1234.8" y1="492.0" x2="1234.8" y2="497.5" stroke="#141414" stroke-width="1" />
<polyline points="1238.0,500.0 1224.0,516.0" fill="none" stroke="#141414" stroke-width="2"/>
<polyline points="1238.0,500.0 1224.0,516.0" fill="none" stroke="#9a9a9a" stroke-width="0.600" stroke-dasharray="2 3"/>
<line x1="1238.0" y1="500.0" x2="1238.0" y2="505.5" stroke="#141414" stroke-width="1" />
<line x1="1234.5" y1="504.0" x2="1234.5" y2="509.5" stroke="#141414" stroke-width="1" />
<line x1="1231.0" y1="508.0" x2="1231.0" y2="513.5" stroke="#141414" stroke-width="1" />
<line x1="1227.5" y1="512.0" x2="1227.5" y2="517.5" stroke="#141414" stroke-width="1" />
<polyline points="1244.0,442.0 1257.0,452.0" fill="none" stroke="#141414" stroke-width="2"/>
<polyline points="1244.0,442.0 1257.0,452.0" fill="none" stroke="#9a9a9a" stroke-width="0.600" stroke-dasharray="2 3"/>
<line x1="1244.0" y1="442.0" x2="1244.0" y2="447.5" stroke="#141414" stroke-width="1" />
<line x1="1247.2" y1="444.5" x2="1247.2" y2="450.0" stroke="#141414" stroke-width="1" />
<line x1="1250.5" y1="447.0" x2="1250.5" y2="452.5" stroke="#141414" stroke-width="1" />
<line x1="1253.8" y1="449.5" x2="1253.8" y2="455.0" stroke="#141414" stroke-width="1" />
<polyline points="1244.0,480.0 1257.0,490.0" fill="none" stroke="#141414" stroke-width="2"/>
<polyline points="1244.0,480.0 1257.0,490.0" fill="none" stroke="#9a9a9a" stroke-width="0.600" stroke-dasharray="2 3"/>
<line x1="1244.0" y1="480.0" x2="1244.0" y2="485.5" stroke="#141414" stroke-width="1" />
<line x1="1247.2" y1="482.5" x2="1247.2" y2="488.0" stroke="#141414" stroke-width="1" />
<line x1="1250.5" y1="485.0" x2="1250.5" y2="490.5" stroke="#141414" stroke-width="1" />
<line x1="1253.8" y1="487.5" x2="1253.8" y2="493.0" stroke="#141414" stroke-width="1" />
<path d="M1246.2,455.6L1244.0,456.0v5l2.2,-0.4 M1246.1,455.6L1248.3,455.2v5l-2.2,0.4 M1254.9,453.9L1252.7,454.3v5l2.2,-0.4 M1254.8,453.9L1257.0,453.5v5l-2.2,0.4" stroke="#0a0a0a" stroke-width="1.150" fill="none"/>
<line x1="1244.0" y1="455.7" x2="1257.0" y2="453.2" stroke="#0a0a0a" stroke-width="1.100" stroke-dasharray="2.600 2.200"/>
<path d="M1246.2,493.6L1244.0,494.0v5l2.2,-0.4 M1246.1,493.6L1248.3,493.2v5l-2.2,0.4 M1254.9,491.9L1252.7,492.3v5l2.2,-0.4 M1254.8,491.9L1257.0,491.5v5l-2.2,0.4" stroke="#0a0a0a" stroke-width="1.150" fill="none"/>
<line x1="1244.0" y1="493.7" x2="1257.0" y2="491.2" stroke="#0a0a0a" stroke-width="1.100" stroke-dasharray="2.600 2.200"/>
<polygon points="640.0,777.0 647.5,686.7 648.0,599.0 1226.0,490.3 1226.5,613.8 1231.2,652.9 1240.0,661.5 1240.0,664.1" fill="#c4c4c4" />
<polygon points="648.0,599.0 1226.0,490.3 1226.0,504.3 648.0,613.0" fill="#cacaca" />
<polygon points="648.0,613.0 1226.0,504.3 1226.0,539.3 648.0,648.0" fill="#d0d0d0" />
<polygon points="648.0,648.0 1226.0,539.3 1226.0,560.3 648.0,669.0" fill="#bfbfbf" />
<polygon points="647.5,669.1 1227.0,560.1 1227.0,572.1 647.5,681.1" fill="#cacaca" />
<polygon points="647.0,681.2 1228.0,571.9 1228.0,581.9 647.0,691.2" fill="#c6c6c6" />
<polygon points="646.0,691.4 1229.0,581.7 1229.0,600.0 646.0,709.7" fill="#bcbcbc" />
<polygon points="655.0,614.7 712.0,603.9 712.0,628.9 655.0,639.7" fill="#d6d6d6" />
<line x1="658.0" y1="636.1" x2="709.0" y2="626.5" stroke="#f4f4f4" stroke-width="4" stroke-dasharray="1.200 3" opacity="0.800"/>
<line x1="658.0" y1="640.1" x2="709.0" y2="630.5" stroke="#8a8a8a" stroke-width="3" stroke-dasharray="1 3.200" opacity="0.700"/>
<line x1="659.0" y1="622.9" x2="706.0" y2="614.1" stroke="#444" stroke-width="1" stroke-dasharray="1 6 1 9" opacity="0.800"/>
<line x1="663.0" y1="617.2" x2="709.0" y2="608.5" stroke="#555" stroke-width="1" stroke-dasharray="1 11 1 5" opacity="0.700"/>
<polygon points="745.0,597.7 822.0,583.3 822.0,608.3 745.0,622.7" fill="#d6d6d6" />
<line x1="748.0" y1="619.2" x2="819.0" y2="605.8" stroke="#f4f4f4" stroke-width="4" stroke-dasharray="1.200 3" opacity="0.800"/>
<line x1="748.0" y1="623.2" x2="819.0" y2="609.8" stroke="#8a8a8a" stroke-width="3" stroke-dasharray="1 3.200" opacity="0.700"/>
<line x1="749.0" y1="606.0" x2="816.0" y2="593.4" stroke="#444" stroke-width="1" stroke-dasharray="1 6 1 9" opacity="0.800"/>
<line x1="753.0" y1="600.2" x2="819.0" y2="587.8" stroke="#555" stroke-width="1" stroke-dasharray="1 11 1 5" opacity="0.700"/>
<polygon points="850.0,578.0 940.0,561.1 940.0,586.1 850.0,603.0" fill="#d6d6d6" />
<line x1="853.0" y1="599.4" x2="937.0" y2="583.6" stroke="#f4f4f4" stroke-width="4" stroke-dasharray="1.200 3" opacity="0.800"/>
<line x1="853.0" y1="603.4" x2="937.0" y2="587.6" stroke="#8a8a8a" stroke-width="3" stroke-dasharray="1 3.200" opacity="0.700"/>
<line x1="854.0" y1="586.2" x2="934.0" y2="571.2" stroke="#444" stroke-width="1" stroke-dasharray="1 6 1 9" opacity="0.800"/>
<line x1="858.0" y1="580.5" x2="937.0" y2="565.6" stroke="#555" stroke-width="1" stroke-dasharray="1 11 1 5" opacity="0.700"/>
<polygon points="960.0,557.3 1055.0,539.5 1055.0,564.5 960.0,582.3" fill="#d6d6d6" />
<line x1="963.0" y1="578.8" x2="1052.0" y2="562.0" stroke="#f4f4f4" stroke-width="4" stroke-dasharray="1.200 3" opacity="0.800"/>
<line x1="963.0" y1="582.8" x2="1052.0" y2="566.0" stroke="#8a8a8a" stroke-width="3" stroke-dasharray="1 3.200" opacity="0.700"/>
<line x1="964.0" y1="565.6" x2="1049.0" y2="549.6" stroke="#444" stroke-width="1" stroke-dasharray="1 6 1 9" opacity="0.800"/>
<line x1="968.0" y1="559.8" x2="1052.0" y2="544.0" stroke="#555" stroke-width="1" stroke-dasharray="1 11 1 5" opacity="0.700"/>
<polygon points="1085.0,533.8 1166.0,518.6 1166.0,543.6 1085.0,558.8" fill="#d6d6d6" />
<line x1="1088.0" y1="555.3" x2="1163.0" y2="541.2" stroke="#f4f4f4" stroke-width="4" stroke-dasharray="1.200 3" opacity="0.800"/>
<line x1="1088.0" y1="559.3" x2="1163.0" y2="545.2" stroke="#8a8a8a" stroke-width="3" stroke-dasharray="1 3.200" opacity="0.700"/>
<line x1="1089.0" y1="542.1" x2="1160.0" y2="528.7" stroke="#444" stroke-width="1" stroke-dasharray="1 6 1 9" opacity="0.800"/>
<line x1="1093.0" y1="536.3" x2="1163.0" y2="523.2" stroke="#555" stroke-width="1" stroke-dasharray="1 11 1 5" opacity="0.700"/>
<polygon points="1196.0,513.0 1222.0,508.1 1222.0,533.1 1196.0,538.0" fill="#d6d6d6" />
<line x1="1199.0" y1="534.4" x2="1219.0" y2="530.6" stroke="#f4f4f4" stroke-width="4" stroke-dasharray="1.200 3" opacity="0.800"/>
<line x1="1199.0" y1="538.4" x2="1219.0" y2="534.6" stroke="#8a8a8a" stroke-width="3" stroke-dasharray="1 3.200" opacity="0.700"/>
<line x1="1200.0" y1="521.2" x2="1216.0" y2="518.2" stroke="#444" stroke-width="1" stroke-dasharray="1 6 1 9" opacity="0.800"/>
<line x1="1204.0" y1="515.4" x2="1219.0" y2="512.6" stroke="#555" stroke-width="1" stroke-dasharray="1 11 1 5" opacity="0.700"/>
<polygon points="658.8,707.2 750.8,689.9 750.8,693.4 658.8,710.7" fill="#e0e0e0" />
<polygon points="658.8,710.7 750.8,693.4 750.8,749.1 658.8,766.4" fill="#d7d7d7" />
<polygon points="658.8,766.4 750.8,749.1 750.8,756.0 658.8,773.3" fill="#c6c6c6" />
<line x1="662.8" y1="706.0" x2="742.8" y2="691.0" stroke="#1a1a1a" stroke-width="1.2" stroke-dasharray="3 2.500 2 5 1 3 4 6"/>
<line x1="670.8" y1="707.2" x2="720.8" y2="697.8" stroke="#333" stroke-width="1" stroke-dasharray="2 9 3 14 1 20"/>
<polygon points="768.5,686.6 860.6,669.3 860.6,672.8 768.5,690.1" fill="#e0e0e0" />
<polygon points="768.5,690.1 860.6,672.8 860.6,728.5 768.5,745.8" fill="#d7d7d7" />
<polygon points="768.5,745.8 860.6,728.5 860.6,735.4 768.5,752.7" fill="#c6c6c6" />
<line x1="772.5" y1="685.4" x2="852.6" y2="670.3" stroke="#1a1a1a" stroke-width="1.2" stroke-dasharray="3 2.500 2 5 1 3 4 6"/>
<line x1="780.5" y1="686.6" x2="830.6" y2="677.1" stroke="#333" stroke-width="1" stroke-dasharray="2 9 3 14 1 20"/>
<polygon points="878.4,666.0 976.0,647.6 976.0,651.1 878.4,669.5" fill="#e0e0e0" />
<polygon points="878.4,669.5 976.0,651.1 976.0,706.8 878.4,725.2" fill="#d7d7d7" />
<polygon points="878.4,725.2 976.0,706.8 976.0,713.7 878.4,732.1" fill="#c6c6c6" />
<line x1="882.4" y1="664.7" x2="968.0" y2="648.6" stroke="#1a1a1a" stroke-width="1.2" stroke-dasharray="3 2.500 2 5 1 3 4 6"/>
<line x1="890.4" y1="665.9" x2="946.0" y2="655.5" stroke="#333" stroke-width="1" stroke-dasharray="2 9 3 14 1 20"/>
<polygon points="999.4,643.2 1093.6,625.5 1093.6,629.0 999.4,646.7" fill="#e0e0e0" />
<polygon points="999.4,646.7 1093.6,629.0 1093.6,684.7 999.4,702.4" fill="#d7d7d7" />
<polygon points="999.4,702.4 1093.6,684.7 1093.6,691.6 999.4,709.3" fill="#c6c6c6" />
<line x1="1003.4" y1="642.0" x2="1085.6" y2="626.5" stroke="#1a1a1a" stroke-width="1.2" stroke-dasharray="3 2.500 2 5 1 3 4 6"/>
<line x1="1011.4" y1="643.2" x2="1063.6" y2="633.3" stroke="#333" stroke-width="1" stroke-dasharray="2 9 3 14 1 20"/>
<polygon points="1111.3,622.2 1205.0,604.6 1205.0,608.1 1111.3,625.7" fill="#e0e0e0" />
<polygon points="1111.3,625.7 1205.0,608.1 1205.0,663.8 1111.3,681.4" fill="#d7d7d7" />
<polygon points="1111.3,681.4 1205.0,663.8 1205.0,670.7 1111.3,688.3" fill="#c6c6c6" />
<line x1="1115.3" y1="620.9" x2="1197.0" y2="605.6" stroke="#1a1a1a" stroke-width="1.2" stroke-dasharray="3 2.500 2 5 1 3 4 6"/>
<line x1="1123.3" y1="622.1" x2="1175.0" y2="612.4" stroke="#333" stroke-width="1" stroke-dasharray="2 9 3 14 1 20"/>
<polygon points="750.6,673.2 756.6,669.1 756.6,754.2 750.6,753.7" fill="#393939" />
<polygon points="755.6,669.2 767.7,667.0 767.7,753.2 761.6,755.9 755.6,755.4" fill="url(#cyl)" />
<polygon points="860.4,652.5 866.4,648.4 866.4,733.6 860.4,733.0" fill="#393939" />
<polygon points="865.4,648.6 877.6,646.3 877.6,732.5 871.5,735.3 865.4,734.8" fill="url(#cyl)" />
<polygon points="975.8,630.8 981.8,626.7 981.8,711.9 975.8,711.3" fill="#393939" />
<polygon points="980.8,626.9 998.6,623.6 998.6,709.8 989.7,713.0 980.8,713.1" fill="url(#cyl)" />
<polygon points="1093.4,608.7 1099.4,604.6 1099.4,689.8 1093.4,689.2" fill="#393939" />
<polygon points="1098.4,604.8 1110.5,602.5 1110.5,688.7 1104.5,691.5 1098.4,691.0" fill="url(#cyl)" />
<polygon points="1212.0,574.9 1226.5,613.8 1231.2,652.9 1243.0,663.5 1240.0,664.1 1212.0,669.3" fill="#c3c3c3" />
<polygon points="1205.0,600.3 1212.0,598.9 1212.0,668.9 1205.0,665.3" fill="#383838" />
<polygon points="640.0,777.0 647.5,686.7 658.0,689.1 658.0,773.5" fill="#c2c2c2" />
<line x1="871.1" y1="557.0" x2="871.1" y2="643.7" stroke="#5a5a5a" stroke-width="1" />
<polygon points="877.6,643.7 882.7,642.8 882.7,730.9 877.6,731.8" fill="#bdbdbd" />
<line x1="877.6" y1="643.7" x2="877.6" y2="755.8" stroke="#555" stroke-width="1" />
<polygon points="718.8,633.7 739.3,649.1 718.8,653.9" fill="#3b3b3b" />
<polygon points="741.8,589.3 744.3,588.9 744.3,662.9 741.8,663.3" fill="#3c3c3c" />
<polygon points="751.0,587.6 754.0,587.0 754.0,657.0 751.0,657.6" fill="#3c3c3c" />
<polygon points="744.3,594.9 751.0,593.6 751.0,661.6 744.3,662.9" fill="#cdcdcd" />
<line x1="740.8" y1="605.5" x2="751.8" y2="612.5" stroke="#3c3c3c" stroke-width="2.2" />
<polygon points="710.8,601.2 713.2,600.7 713.2,626.7 710.8,627.2" fill="#444" />
<polygon points="754.0,611.0 756.0,610.7 756.0,670.7 754.0,671.0" fill="#4a4a4a" />
<polygon points="828.5,613.0 849.0,628.4 828.5,633.2" fill="#3b3b3b" />
<polygon points="851.5,568.7 854.0,568.2 854.0,642.2 851.5,642.7" fill="#3c3c3c" />
<polygon points="860.7,567.0 863.7,566.4 863.7,636.4 860.7,637.0" fill="#3c3c3c" />
<polygon points="854.0,574.2 860.7,573.0 860.7,641.0 854.0,642.2" fill="#cdcdcd" />
<line x1="850.5" y1="584.9" x2="861.5" y2="591.8" stroke="#3c3c3c" stroke-width="2.2" />
<polygon points="820.5,580.5 822.9,580.1 822.9,606.1 820.5,606.5" fill="#444" />
<polygon points="863.7,590.4 865.7,590.0 865.7,650.0 863.7,650.4" fill="#4a4a4a" />
<polygon points="945.4,591.1 965.9,606.5 945.4,611.3" fill="#3b3b3b" />
<polygon points="968.4,546.7 970.9,546.3 970.9,620.3 968.4,620.7" fill="#3c3c3c" />
<polygon points="977.6,545.0 980.6,544.4 980.6,614.4 977.6,615.0" fill="#3c3c3c" />
<polygon points="970.9,552.3 977.6,551.0 977.6,619.0 970.9,620.3" fill="#cdcdcd" />
<line x1="967.4" y1="562.9" x2="978.4" y2="569.9" stroke="#3c3c3c" stroke-width="2.2" />
<polygon points="937.4,558.6 939.8,558.1 939.8,584.1 937.4,584.6" fill="#444" />
<polygon points="980.6,568.4 982.6,568.1 982.6,628.1 980.6,628.4" fill="#4a4a4a" />
<polygon points="1061.9,569.2 1082.4,584.6 1061.9,589.4" fill="#3b3b3b" />
<polygon points="1084.9,524.8 1087.4,524.4 1087.4,598.4 1084.9,598.8" fill="#3c3c3c" />
<polygon points="1094.1,523.1 1097.1,522.5 1097.1,592.5 1094.1,593.1" fill="#3c3c3c" />
<polygon points="1087.4,530.4 1094.1,529.1 1094.1,597.1 1087.4,598.4" fill="#cdcdcd" />
<line x1="1083.9" y1="541.0" x2="1094.9" y2="548.0" stroke="#3c3c3c" stroke-width="2.2" />
<polygon points="1053.9,536.7 1056.3,536.2 1056.3,562.2 1053.9,562.7" fill="#444" />
<polygon points="1097.1,546.5 1099.1,546.2 1099.1,606.2 1097.1,606.5" fill="#4a4a4a" />
<polygon points="1171.6,548.5 1192.1,563.9 1171.6,568.7" fill="#3b3b3b" />
<polygon points="1194.6,504.2 1197.1,503.7 1197.1,577.7 1194.6,578.2" fill="#3c3c3c" />
<polygon points="1203.8,502.5 1206.8,501.9 1206.8,571.9 1203.8,572.5" fill="#3c3c3c" />
<polygon points="1197.1,509.7 1203.8,508.5 1203.8,576.5 1197.1,577.7" fill="#cdcdcd" />
<line x1="1193.6" y1="520.4" x2="1204.6" y2="527.3" stroke="#3c3c3c" stroke-width="2.2" />
<polygon points="1163.6,516.0 1166.0,515.6 1166.0,541.6 1163.6,542.0" fill="#444" />
<polygon points="1206.8,525.9 1208.8,525.5 1208.8,585.5 1206.8,585.9" fill="#4a4a4a" />
<polygon points="668.0,609.2 671.0,608.7 671.0,646.7 668.0,647.2" fill="#555" />
<polygon points="1172.5,515.4 1180.5,513.9 1180.5,558.9 1172.5,560.4" fill="#3a3a3a" />
<polygon points="1186.0,512.8 1190.0,512.1 1190.0,549.1 1186.0,549.8" fill="#3a3a3a" />
<polygon points="1196.0,510.0 1204.0,508.4 1204.0,586.4 1196.0,588.0" fill="#3a3a3a" />
<polygon points="1208.0,505.7 1212.5,504.9 1212.5,529.9 1208.0,530.7" fill="#3a3a3a" />
<line x1="1181.0" y1="540.8" x2="1196.0" y2="550.0" stroke="#3a3a3a" stroke-width="3" />
<polygon points="606.0,545.9 1180.0,438.0 1180.0,460.0 606.0,567.9" fill="#2f2f2f" />
<polygon points="671.4,531.6 676.6,530.6 676.6,555.6 671.4,556.6" fill="#c6c6c6" />
<polygon points="715.8,523.2 721.0,522.3 721.0,547.3 715.8,548.2" fill="#c6c6c6" />
<polygon points="786.7,509.9 795.0,508.3 795.0,533.3 786.7,534.9" fill="#c6c6c6" />
<polygon points="825.0,502.7 838.0,500.3 838.0,525.3 825.0,527.7" fill="#c6c6c6" />
<polygon points="831.0,503.6 832.0,503.4 832.0,526.4 831.0,526.6" fill="#444" />
<polygon points="941.0,480.9 955.6,478.1 955.6,503.1 941.0,505.9" fill="#c6c6c6" />
<polygon points="947.8,481.6 948.8,481.4 948.8,504.4 947.8,504.6" fill="#444" />
<polygon points="1013.0,467.4 1020.0,466.0 1020.0,491.0 1013.0,492.4" fill="#c6c6c6" />
<polygon points="1059.8,458.6 1064.8,457.6 1064.8,482.6 1059.8,483.6" fill="#c6c6c6" />
<polygon points="1128.0,445.7 1134.0,444.6 1134.0,469.6 1128.0,470.7" fill="#c6c6c6" />
<polygon points="612.0,544.7 614.8,544.2 614.8,548.7 612.0,549.2" fill="#c6c6c6" />
<polygon points="650.0,537.6 652.8,537.1 652.8,541.6 650.0,542.1" fill="#c6c6c6" />
<polygon points="693.0,529.5 695.8,529.0 695.8,533.5 693.0,534.0" fill="#c6c6c6" />
<polygon points="740.0,520.7 742.8,520.2 742.8,524.7 740.0,525.2" fill="#c6c6c6" />
<polygon points="765.0,516.0 767.8,515.5 767.8,520.0 765.0,520.5" fill="#c6c6c6" />
<polygon points="810.0,507.5 812.8,507.0 812.8,511.5 810.0,512.0" fill="#c6c6c6" />
<polygon points="860.0,498.1 862.8,497.6 862.8,502.1 860.0,502.6" fill="#c6c6c6" />
<polygon points="900.0,490.6 902.8,490.1 902.8,494.6 900.0,495.1" fill="#c6c6c6" />
<polygon points="985.0,474.6 987.8,474.1 987.8,478.6 985.0,479.1" fill="#c6c6c6" />
<polygon points="1040.0,464.3 1042.8,463.8 1042.8,468.3 1040.0,468.8" fill="#c6c6c6" />
<polygon points="1090.0,454.9 1092.8,454.4 1092.8,458.9 1090.0,459.4" fill="#c6c6c6" />
<polygon points="1150.0,443.6 1152.8,443.1 1152.8,447.6 1150.0,448.1" fill="#c6c6c6" />
<polygon points="625.0,563.3 1226.0,450.3 1226.0,490.3 625.0,603.3" fill="#cbcbcb" />
<line x1="648.0" y1="587.0" x2="1215.0" y2="480.4" stroke="#333" stroke-width="2.2" />
<polygon points="570.0,570.0 590.0,590.0 624.0,584.0 610.0,568.7" fill="#cacaca" />
<polygon points="610.0,568.7 640.0,592.5 655.0,597.7 655.0,555.7" fill="#cbcbcb" />
<polygon points="510.1,496.1 553.2,487.0 603.0,530.0 579.4,545.9" fill="#c9c9c9" />
<polygon points="510.1,496.1 579.4,545.9 579.4,552.0 510.1,502.0" fill="#aaa" />
<polygon points="579.4,540.9 1200.0,424.2 1200.0,434.7 579.4,551.4" fill="#c8c8c8" />
<polygon points="601.6,482.7 1178.9,374.2 1178.9,428.7 601.6,537.2" fill="#9c9c9c" />
<polygon points="601.6,482.7 1178.9,374.2 1178.9,381.2 601.6,489.7" fill="#8e8e8e" />
<polygon points="553.2,451.7 601.6,485.4 601.6,535.2 553.2,496.1" fill="#2f2f2f" />
<polygon points="571.0,477.3 583.7,487.4 583.7,516.3 571.0,506.2" fill="#46382a" />
<line x1="575.0" y1="483.0" x2="575.0" y2="507.0" stroke="#d8c8a0" stroke-width="0.8" stroke-dasharray="3 2"/>
<line x1="580.0" y1="490.0" x2="580.0" y2="512.0" stroke="#d8c8a0" stroke-width="0.8" stroke-dasharray="1 4"/>
<line x1="1178.9" y1="374.2" x2="1178.9" y2="426.2" stroke="#b5b5b5" stroke-width="1" />
<polygon points="630.4,498.0 652.0,493.9 652.0,516.5 630.4,520.6" fill="#b9b9d6" />
<polygon points="631.2,498.6 651.2,494.9 651.2,515.9 631.2,519.6" fill="#6668d6" />
<line x1="641.2" y1="496.8" x2="641.2" y2="517.8" stroke="#c0c0e8" stroke-width="1.2" />
<line x1="631.2" y1="505.6" x2="651.2" y2="501.8" stroke="#b0b0e8" stroke-width="0.8" stroke-dasharray="3 2"/>
<line x1="631.2" y1="512.5" x2="651.2" y2="508.7" stroke="#b0b0e8" stroke-width="0.8" stroke-dasharray="3 2"/>
<polygon points="670.4,490.5 692.0,486.4 692.0,509.0 670.4,513.1" fill="#b9b9d6" />
<polygon points="671.2,491.1 691.2,487.4 691.2,508.4 671.2,512.1" fill="#6668d6" />
<line x1="681.2" y1="489.2" x2="681.2" y2="510.2" stroke="#c0c0e8" stroke-width="1.2" />
<line x1="671.2" y1="498.0" x2="691.2" y2="494.3" stroke="#b0b0e8" stroke-width="0.8" stroke-dasharray="3 2"/>
<line x1="671.2" y1="505.0" x2="691.2" y2="501.2" stroke="#b0b0e8" stroke-width="0.8" stroke-dasharray="3 2"/>
<polygon points="742.8,476.9 764.4,472.8 764.4,495.4 742.8,499.5" fill="#b9b9d6" />
<polygon points="743.6,477.5 763.6,473.7 763.6,494.7 743.6,498.5" fill="#6668d6" />
<line x1="753.6" y1="475.6" x2="753.6" y2="496.6" stroke="#c0c0e8" stroke-width="1.2" />
<line x1="743.6" y1="484.4" x2="763.6" y2="480.7" stroke="#b0b0e8" stroke-width="0.8" stroke-dasharray="3 2"/>
<line x1="743.6" y1="491.4" x2="763.6" y2="487.6" stroke="#b0b0e8" stroke-width="0.8" stroke-dasharray="3 2"/>
<polygon points="784.7,469.0 806.3,464.9 806.3,487.5 784.7,491.6" fill="#b9b9d6" />
<polygon points="785.5,469.6 805.5,465.9 805.5,486.9 785.5,490.6" fill="#6668d6" />
<line x1="795.5" y1="467.7" x2="795.5" y2="488.7" stroke="#c0c0e8" stroke-width="1.2" />
<line x1="785.5" y1="476.6" x2="805.5" y2="472.8" stroke="#b0b0e8" stroke-width="0.8" stroke-dasharray="3 2"/>
<line x1="785.5" y1="483.5" x2="805.5" y2="479.7" stroke="#b0b0e8" stroke-width="0.8" stroke-dasharray="3 2"/>
<polygon points="976.2,433.0 997.8,428.9 997.8,451.5 976.2,455.6" fill="#b9b9d6" />
<polygon points="977.0,433.6 997.0,429.9 997.0,450.9 977.0,454.6" fill="#6668d6" />
<line x1="987.0" y1="431.7" x2="987.0" y2="452.7" stroke="#c0c0e8" stroke-width="1.2" />
<line x1="977.0" y1="440.6" x2="997.0" y2="436.8" stroke="#b0b0e8" stroke-width="0.8" stroke-dasharray="3 2"/>
<line x1="977.0" y1="447.5" x2="997.0" y2="443.7" stroke="#b0b0e8" stroke-width="0.8" stroke-dasharray="3 2"/>
<polygon points="1018.7,425.0 1040.3,420.9 1040.3,443.5 1018.7,447.6" fill="#b9b9d6" />
<polygon points="1019.5,425.6 1039.5,421.9 1039.5,442.9 1019.5,446.6" fill="#6668d6" />
<line x1="1029.5" y1="423.8" x2="1029.5" y2="444.8" stroke="#c0c0e8" stroke-width="1.2" />
<line x1="1019.5" y1="432.6" x2="1039.5" y2="428.8" stroke="#b0b0e8" stroke-width="0.8" stroke-dasharray="3 2"/>
<line x1="1019.5" y1="439.5" x2="1039.5" y2="435.7" stroke="#b0b0e8" stroke-width="0.8" stroke-dasharray="3 2"/>
<polygon points="1146.7,400.9 1168.3,396.9 1168.3,419.5 1146.7,423.5" fill="#b9b9d6" />
<polygon points="1147.5,401.6 1167.5,397.8 1167.5,418.8 1147.5,422.6" fill="#6668d6" />
<line x1="1157.5" y1="399.7" x2="1157.5" y2="420.7" stroke="#c0c0e8" stroke-width="1.2" />
<line x1="1147.5" y1="408.5" x2="1167.5" y2="404.7" stroke="#b0b0e8" stroke-width="0.8" stroke-dasharray="3 2"/>
<line x1="1147.5" y1="415.4" x2="1167.5" y2="411.7" stroke="#b0b0e8" stroke-width="0.8" stroke-dasharray="3 2"/>
<polygon points="895.5,449.9 906.0,448.0 906.0,475.0 895.5,476.9" fill="#d8bd8c" />
<line x1="900.8" y1="449.0" x2="900.8" y2="476.0" stroke="#c4a876" stroke-width="0.8" />
<polygon points="1084.5,412.4 1095.0,410.4 1095.0,437.4 1084.5,439.4" fill="#d8bd8c" />
<line x1="1089.8" y1="411.4" x2="1089.8" y2="438.4" stroke="#c4a876" stroke-width="0.8" />
<polygon points="1105.0,408.6 1115.5,406.6 1115.5,433.6 1105.0,435.6" fill="#d8bd8c" />
<line x1="1110.2" y1="407.6" x2="1110.2" y2="434.6" stroke="#c4a876" stroke-width="0.8" />
<polygon points="539.3,435.6 549.8,426.4 601.0,467.9 597.2,483.4" fill="#8b8b8b" />
<polygon points="549.8,426.4 1130.5,315.1 1133.8,324.2 561.9,434.2" fill="#4c4c4c" />
<polygon points="558.5,432.0 1132.5,321.6 1133.8,324.2 561.9,434.2" fill="#8a8a8a" />
<polygon points="561.9,434.2 1133.8,324.2 1182.3,356.5 601.0,467.9" fill="#c4c4c4" />
<polygon points="601.0,467.9 1182.3,356.5 1192.8,369.3 597.2,483.4" fill="#b9b9b9" />
<polygon points="598.2,479.3 1190.2,366.2 1191.5,367.8 597.8,481.0" fill="#9a9a9a" />
<polygon points="597.8,481.0 1191.5,367.8 1192.8,369.6 597.2,483.4" fill="#d0d0d0" />
<line x1="549.8" y1="426.4" x2="1130.5" y2="315.1" stroke="#e0e0e0" stroke-width="1.5" />
<line x1="549.8" y1="426.4" x2="601.0" y2="467.9" stroke="#d8d8d8" stroke-width="1.6" />
<line x1="601.0" y1="467.9" x2="1182.3" y2="356.5" stroke="#e4e4e4" stroke-width="1" />
<line x1="1130.5" y1="315.1" x2="1182.0" y2="356.0" stroke="#1c1c1c" stroke-width="2.2" />
<line x1="1131.5" y1="314.5" x2="1183.5" y2="355.5" stroke="#d0d0d0" stroke-width="0.9" />
<path d="M581.6,541.1L579.4,541.5v7.5l2.2,-0.4 M583.7,540.7L585.9,540.2v7.5l-2.2,0.4 M594.7,538.6L592.5,539.0v7.5l2.2,-0.4 M596.8,538.2L599.0,537.8v7.5l-2.2,0.4 M607.7,536.1L605.5,536.6v7.5l2.2,-0.4 M609.9,535.7L612.1,535.3v7.5l-2.2,0.4 M620.8,533.7L618.6,534.1v7.5l2.2,-0.4 M622.9,533.3L625.1,532.9v7.5l-2.2,0.4 M633.9,531.2L631.7,531.6v7.5l2.2,-0.4 M636.0,530.8L638.2,530.4v7.5l-2.2,0.4 M646.9,528.8L644.7,529.2v7.5l2.2,-0.4 M649.1,528.4L651.3,528.0v7.5l-2.2,0.4 M660.0,526.3L657.8,526.7v7.5l2.2,-0.4 M662.1,525.9L664.3,525.5v7.5l-2.2,0.4 M673.1,523.9L670.9,524.3v7.5l2.2,-0.4 M675.2,523.5L677.4,523.1v7.5l-2.2,0.4 M686.1,521.4L683.9,521.8v7.5l2.2,-0.4 M688.3,521.0L690.5,520.6v7.5l-2.2,0.4 M699.2,519.0L697.0,519.4v7.5l2.2,-0.4 M701.3,518.6L703.5,518.1v7.5l-2.2,0.4 M712.3,516.5L710.1,516.9v7.5l2.2,-0.4 M714.4,516.1L716.6,515.7v7.5l-2.2,0.4 M725.3,514.0L723.1,514.5v7.5l2.2,-0.4 M727.5,513.6L729.7,513.2v7.5l-2.2,0.4 M738.4,511.6L736.2,512.0v7.5l2.2,-0.4 M740.5,511.2L742.7,510.8v7.5l-2.2,0.4 M751.4,509.1L749.2,509.5v7.5l2.2,-0.4 M753.6,508.7L755.8,508.3v7.5l-2.2,0.4 M764.5,506.7L762.3,507.1v7.5l2.2,-0.4 M766.6,506.3L768.8,505.9v7.5l-2.2,0.4 M777.6,504.2L775.4,504.6v7.5l2.2,-0.4 M779.7,503.8L781.9,503.4v7.5l-2.2,0.4 M790.6,501.8L788.4,502.2v7.5l2.2,-0.4 M792.8,501.4L795.0,500.9v7.5l-2.2,0.4 M803.7,499.3L801.5,499.7v7.5l2.2,-0.4 M805.8,498.9L808.0,498.5v7.5l-2.2,0.4 M816.8,496.8L814.6,497.3v7.5l2.2,-0.4 M818.9,496.4L821.1,496.0v7.5l-2.2,0.4 M829.8,494.4L827.6,494.8v7.5l2.2,-0.4 M832.0,494.0L834.2,493.6v7.5l-2.2,0.4 M842.9,491.9L840.7,492.3v7.5l2.2,-0.4 M845.0,491.5L847.2,491.1v7.5l-2.2,0.4 M856.0,489.5L853.8,489.9v7.5l2.2,-0.4 M858.1,489.1L860.3,488.7v7.5l-2.2,0.4 M869.0,487.0L866.8,487.4v7.5l2.2,-0.4 M871.2,486.6L873.4,486.2v7.5l-2.2,0.4 M882.1,484.6L879.9,485.0v7.5l2.2,-0.4 M884.2,484.2L886.4,483.8v7.5l-2.2,0.4 M895.2,482.1L893.0,482.5v7.5l2.2,-0.4 M897.3,481.7L899.5,481.3v7.5l-2.2,0.4 M908.2,479.7L906.0,480.1v7.5l2.2,-0.4 M910.4,479.3L912.6,478.8v7.5l-2.2,0.4 M921.3,477.2L919.1,477.6v7.5l2.2,-0.4 M923.4,476.8L925.6,476.4v7.5l-2.2,0.4 M934.4,474.7L932.2,475.2v7.5l2.2,-0.4 M936.5,474.3L938.7,473.9v7.5l-2.2,0.4 M947.4,472.3L945.2,472.7v7.5l2.2,-0.4 M949.6,471.9L951.8,471.5v7.5l-2.2,0.4 M960.5,469.8L958.3,470.2v7.5l2.2,-0.4 M962.6,469.4L964.8,469.0v7.5l-2.2,0.4 M973.6,467.4L971.4,467.8v7.5l2.2,-0.4 M975.7,467.0L977.9,466.6v7.5l-2.2,0.4 M986.6,464.9L984.4,465.3v7.5l2.2,-0.4 M988.8,464.5L991.0,464.1v7.5l-2.2,0.4 M999.7,462.5L997.5,462.9v7.5l2.2,-0.4 M1001.8,462.1L1004.0,461.6v7.5l-2.2,0.4 M1012.8,460.0L1010.6,460.4v7.5l2.2,-0.4 M1014.9,459.6L1017.1,459.2v7.5l-2.2,0.4 M1025.8,457.5L1023.6,458.0v7.5l2.2,-0.4 M1028.0,457.1L1030.2,456.7v7.5l-2.2,0.4 M1038.9,455.1L1036.7,455.5v7.5l2.2,-0.4 M1041.0,454.7L1043.2,454.3v7.5l-2.2,0.4 M1051.9,452.6L1049.7,453.0v7.5l2.2,-0.4 M1054.1,452.2L1056.3,451.8v7.5l-2.2,0.4 M1065.0,450.2L1062.8,450.6v7.5l2.2,-0.4 M1067.1,449.8L1069.3,449.4v7.5l-2.2,0.4 M1078.1,447.7L1075.9,448.1v7.5l2.2,-0.4 M1080.2,447.3L1082.4,446.9v7.5l-2.2,0.4 M1091.1,445.3L1088.9,445.7v7.5l2.2,-0.4 M1093.3,444.9L1095.5,444.5v7.5l-2.2,0.4 M1104.2,442.8L1102.0,443.2v7.5l2.2,-0.4 M1106.3,442.4L1108.5,442.0v7.5l-2.2,0.4 M1117.3,440.4L1115.1,440.8v7.5l2.2,-0.4 M1119.4,440.0L1121.6,439.5v7.5l-2.2,0.4 M1130.3,437.9L1128.1,438.3v7.5l2.2,-0.4 M1132.5,437.5L1134.7,437.1v7.5l-2.2,0.4 M1143.4,435.4L1141.2,435.9v7.5l2.2,-0.4 M1145.5,435.0L1147.7,434.6v7.5l-2.2,0.4 M1156.5,433.0L1154.3,433.4v7.5l2.2,-0.4 M1158.6,432.6L1160.8,432.2v7.5l-2.2,0.4 M1169.5,430.5L1167.3,430.9v7.5l2.2,-0.4 M1171.7,430.1L1173.9,429.7v7.5l-2.2,0.4 M1182.6,428.1L1180.4,428.5v7.5l2.2,-0.4 M1184.7,427.7L1186.9,427.3v7.5l-2.2,0.4 M1195.7,425.6L1193.5,426.0v7.5l2.2,-0.4 M1197.8,425.2L1200.0,424.8v7.5l-2.2,0.4" stroke="#0a0a0a" stroke-width="1.150" fill="none"/>
<line x1="579.4" y1="541.2" x2="1200.0" y2="424.5" stroke="#0a0a0a" stroke-width="1.100" stroke-dasharray="2.600 2.200"/>
<path d="M642.2,557.1L640.0,557.5v7.5l2.2,-0.4 M644.3,556.7L646.5,556.3v7.5l-2.2,0.4 M655.2,554.6L653.0,555.0v7.5l2.2,-0.4 M657.3,554.2L659.5,553.8v7.5l-2.2,0.4 M668.2,552.2L666.0,552.6v7.5l2.2,-0.4 M670.3,551.8L672.5,551.4v7.5l-2.2,0.4 M681.2,549.7L679.0,550.1v7.5l2.2,-0.4 M683.3,549.3L685.5,548.9v7.5l-2.2,0.4 M694.2,547.3L692.0,547.7v7.5l2.2,-0.4 M696.4,546.9L698.6,546.5v7.5l-2.2,0.4 M707.3,544.8L705.1,545.2v7.5l2.2,-0.4 M709.4,544.4L711.6,544.0v7.5l-2.2,0.4 M720.3,542.4L718.1,542.8v7.5l2.2,-0.4 M722.4,542.0L724.6,541.6v7.5l-2.2,0.4 M733.3,539.9L731.1,540.4v7.5l2.2,-0.4 M735.4,539.5L737.6,539.1v7.5l-2.2,0.4 M746.3,537.5L744.1,537.9v7.5l2.2,-0.4 M748.4,537.1L750.6,536.7v7.5l-2.2,0.4 M759.3,535.1L757.1,535.5v7.5l2.2,-0.4 M761.4,534.7L763.6,534.2v7.5l-2.2,0.4 M772.3,532.6L770.1,533.0v7.5l2.2,-0.4 M774.4,532.2L776.6,531.8v7.5l-2.2,0.4 M785.3,530.2L783.1,530.6v7.5l2.2,-0.4 M787.4,529.8L789.6,529.3v7.5l-2.2,0.4 M798.3,527.7L796.1,528.1v7.5l2.2,-0.4 M800.5,527.3L802.7,526.9v7.5l-2.2,0.4 M811.4,525.3L809.2,525.7v7.5l2.2,-0.4 M813.5,524.9L815.7,524.5v7.5l-2.2,0.4 M824.4,522.8L822.2,523.2v7.5l2.2,-0.4 M826.5,522.4L828.7,522.0v7.5l-2.2,0.4 M837.4,520.4L835.2,520.8v7.5l2.2,-0.4 M839.5,520.0L841.7,519.6v7.5l-2.2,0.4 M850.4,517.9L848.2,518.3v7.5l2.2,-0.4 M852.5,517.5L854.7,517.1v7.5l-2.2,0.4 M863.4,515.5L861.2,515.9v7.5l2.2,-0.4 M865.5,515.1L867.7,514.7v7.5l-2.2,0.4 M876.4,513.0L874.2,513.4v7.5l2.2,-0.4 M878.5,512.6L880.7,512.2v7.5l-2.2,0.4 M889.4,510.6L887.2,511.0v7.5l2.2,-0.4 M891.5,510.2L893.7,509.8v7.5l-2.2,0.4 M902.4,508.1L900.2,508.6v7.5l2.2,-0.4 M904.5,507.7L906.7,507.3v7.5l-2.2,0.4 M915.5,505.7L913.3,506.1v7.5l2.2,-0.4 M917.6,505.3L919.8,504.9v7.5l-2.2,0.4 M928.5,503.2L926.3,503.7v7.5l2.2,-0.4 M930.6,502.9L932.8,502.4v7.5l-2.2,0.4 M941.5,500.8L939.3,501.2v7.5l2.2,-0.4 M943.6,500.4L945.8,500.0v7.5l-2.2,0.4 M954.5,498.4L952.3,498.8v7.5l2.2,-0.4 M956.6,498.0L958.8,497.5v7.5l-2.2,0.4 M967.5,495.9L965.3,496.3v7.5l2.2,-0.4 M969.6,495.5L971.8,495.1v7.5l-2.2,0.4 M980.5,493.5L978.3,493.9v7.5l2.2,-0.4 M982.6,493.1L984.8,492.7v7.5l-2.2,0.4 M993.5,491.0L991.3,491.4v7.5l2.2,-0.4 M995.6,490.6L997.8,490.2v7.5l-2.2,0.4 M1006.5,488.6L1004.3,489.0v7.5l2.2,-0.4 M1008.6,488.2L1010.8,487.8v7.5l-2.2,0.4 M1019.5,486.1L1017.3,486.5v7.5l2.2,-0.4 M1021.7,485.7L1023.9,485.3v7.5l-2.2,0.4 M1032.6,483.7L1030.4,484.1v7.5l2.2,-0.4 M1034.7,483.3L1036.9,482.9v7.5l-2.2,0.4 M1045.6,481.2L1043.4,481.6v7.5l2.2,-0.4 M1047.7,480.8L1049.9,480.4v7.5l-2.2,0.4 M1058.6,478.8L1056.4,479.2v7.5l2.2,-0.4 M1060.7,478.4L1062.9,478.0v7.5l-2.2,0.4 M1071.6,476.3L1069.4,476.8v7.5l2.2,-0.4 M1073.7,475.9L1075.9,475.5v7.5l-2.2,0.4 M1084.6,473.9L1082.4,474.3v7.5l2.2,-0.4 M1086.7,473.5L1088.9,473.1v7.5l-2.2,0.4 M1097.6,471.4L1095.4,471.9v7.5l2.2,-0.4 M1099.7,471.1L1101.9,470.6v7.5l-2.2,0.4 M1110.6,469.0L1108.4,469.4v7.5l2.2,-0.4 M1112.7,468.6L1114.9,468.2v7.5l-2.2,0.4 M1123.6,466.6L1121.4,467.0v7.5l2.2,-0.4 M1125.8,466.2L1128.0,465.7v7.5l-2.2,0.4 M1136.7,464.1L1134.5,464.5v7.5l2.2,-0.4 M1138.8,463.7L1141.0,463.3v7.5l-2.2,0.4 M1149.7,461.7L1147.5,462.1v7.5l2.2,-0.4 M1151.8,461.3L1154.0,460.9v7.5l-2.2,0.4 M1162.7,459.2L1160.5,459.6v7.5l2.2,-0.4 M1164.8,458.8L1167.0,458.4v7.5l-2.2,0.4 M1175.7,456.8L1173.5,457.2v7.5l2.2,-0.4 M1177.8,456.4L1180.0,456.0v7.5l-2.2,0.4" stroke="#0a0a0a" stroke-width="1.150" fill="none"/>
<line x1="640.0" y1="557.2" x2="1180.0" y2="455.7" stroke="#0a0a0a" stroke-width="1.100" stroke-dasharray="2.600 2.200"/>
<path d="M513.6,488.3L511.4,486.5v7.5l2.2,1.8 M512.8,487.6L515.0,489.4v7.5l-2.2,-1.8 M520.8,494.0L518.6,492.2v7.5l2.2,1.8 M519.9,493.3L522.1,495.1v7.5l-2.2,-1.8 M527.9,499.7L525.7,498.0v7.5l2.2,1.8 M527.1,499.1L529.3,500.8v7.5l-2.2,-1.8 M535.1,505.5L532.9,503.7v7.5l2.2,1.8 M534.3,504.8L536.5,506.6v7.5l-2.2,-1.8 M542.2,511.2L540.0,509.4v7.5l2.2,1.8 M541.4,510.6L543.6,512.3v7.5l-2.2,-1.8 M549.4,516.9L547.2,515.2v7.5l2.2,1.8 M548.6,516.3L550.8,518.1v7.5l-2.2,-1.8 M556.5,522.7L554.3,520.9v7.5l2.2,1.8 M555.7,522.0L557.9,523.8v7.5l-2.2,-1.8 M563.7,528.4L561.5,526.7v7.5l2.2,1.8 M562.9,527.8L565.1,529.5v7.5l-2.2,-1.8 M570.9,534.2L568.7,532.4v7.5l2.2,1.8 M570.0,533.5L572.2,535.3v7.5l-2.2,-1.8 M578.0,539.9L575.8,538.1v7.5l2.2,1.8 M577.2,539.2L579.4,541.0v7.5l-2.2,-1.8" stroke="#0a0a0a" stroke-width="1.150" fill="none"/>
<line x1="511.4" y1="486.2" x2="579.4" y2="540.7" stroke="#0a0a0a" stroke-width="1.100" stroke-dasharray="2.600 2.200"/>
<path d="M513.6,486.1L511.4,486.5v6.5l2.2,-0.4 M514.4,485.9L516.6,485.5v6.5l-2.2,0.4 M524.0,484.1L521.8,484.5v6.5l2.2,-0.4 M524.8,483.9L527.0,483.5v6.5l-2.2,0.4 M534.4,482.1L532.2,482.5v6.5l2.2,-0.4 M535.2,481.9L537.4,481.5v6.5l-2.2,0.4 M544.8,480.1L542.6,480.5v6.5l2.2,-0.4 M545.6,479.9L547.8,479.5v6.5l-2.2,0.4 M555.2,478.1L553.0,478.5v6.5l2.2,-0.4" stroke="#0a0a0a" stroke-width="1.150" fill="none"/>
<line x1="511.4" y1="486.2" x2="553.0" y2="478.2" stroke="#0a0a0a" stroke-width="1.100" stroke-dasharray="2.600 2.200"/>
<path d="M572.2,567.2L570.0,565.0v7l2.2,2.2 M571.1,566.1L573.3,568.3v7l-2.2,-2.2 M578.9,573.9L576.7,571.7v7l2.2,2.2 M577.8,572.8L580.0,575.0v7l-2.2,-2.2 M585.5,580.5L583.3,578.3v7l2.2,2.2 M584.5,579.5L586.7,581.7v7l-2.2,-2.2 M592.2,587.2L590.0,585.0v7l2.2,2.2" stroke="#0a0a0a" stroke-width="1.150" fill="none"/>
<line x1="570.0" y1="564.7" x2="590.0" y2="584.7" stroke="#0a0a0a" stroke-width="1.100" stroke-dasharray="2.600 2.200"/>
<path d="M592.2,584.6L590.0,585.0v7l2.2,-0.4 M593.5,584.3L595.7,583.9v7l-2.2,0.4 M603.5,582.5L601.3,582.9v7l2.2,-0.4 M604.8,582.2L607.0,581.8v7l-2.2,0.4 M614.9,580.3L612.7,580.7v7l2.2,-0.4 M616.1,580.1L618.3,579.7v7l-2.2,0.4 M626.2,578.2L624.0,578.6v7l2.2,-0.4" stroke="#0a0a0a" stroke-width="1.150" fill="none"/>
<line x1="590.0" y1="584.7" x2="624.0" y2="578.3" stroke="#0a0a0a" stroke-width="1.100" stroke-dasharray="2.600 2.200"/>
<path d="M574.2,565.6L572.0,566.0v5.5l2.2,-0.4 M576.6,565.1L578.8,564.7v5.5l-2.2,0.4 M587.8,563.0L585.6,563.4v5.5l2.2,-0.4 M590.2,562.5L592.4,562.1v5.5l-2.2,0.4 M601.4,560.4L599.2,560.8v5.5l2.2,-0.4 M603.8,559.9L606.0,559.5v5.5l-2.2,0.4 M615.0,557.8L612.8,558.2v5.5l2.2,-0.4 M617.4,557.3L619.6,556.9v5.5l-2.2,0.4 M628.6,555.2L626.4,555.6v5.5l2.2,-0.4 M631.0,554.7L633.2,554.3v5.5l-2.2,0.4 M642.2,552.6L640.0,553.0v5.5l2.2,-0.4" stroke="#0a0a0a" stroke-width="1.150" fill="none"/>
<line x1="572.0" y1="565.7" x2="640.0" y2="552.7" stroke="#0a0a0a" stroke-width="1.100" stroke-dasharray="2.600 2.200"/>
<line x1="610.0" y1="566.0" x2="640.0" y2="591.0" stroke="#111" stroke-width="2.6" />
<polygon points="650.8,597.4 673.8,593.1 673.8,577.6 650.8,581.9" fill="#3d4a56" />
<polygon points="650.8,597.4 640.0,588.7 640.0,573.2 650.8,581.9" fill="#161b20" />
<polygon points="650.8,581.9 673.8,577.6 663.0,568.9 640.0,573.2" fill="#566674" />
<polygon points="739.8,580.7 762.8,576.4 762.8,560.9 739.8,565.2" fill="#3d4a56" />
<polygon points="739.8,580.7 729.0,572.0 729.0,556.5 739.8,565.2" fill="#161b20" />
<polygon points="739.8,565.2 762.8,560.9 752.0,552.2 729.0,556.5" fill="#566674" />
<polygon points="767.8,575.5 790.8,571.1 790.8,555.6 767.8,560.0" fill="#3d4a56" />
<polygon points="767.8,575.5 757.0,566.7 757.0,551.2 767.8,560.0" fill="#161b20" />
<polygon points="767.8,560.0 790.8,555.6 780.0,546.9 757.0,551.2" fill="#566674" />
<polygon points="836.8,562.5 859.8,558.2 859.8,542.7 836.8,547.0" fill="#3d4a56" />
<polygon points="836.8,562.5 826.0,553.8 826.0,538.3 836.8,547.0" fill="#161b20" />
<polygon points="836.8,547.0 859.8,542.7 849.0,533.9 826.0,538.3" fill="#566674" />
<polygon points="865.8,557.0 888.8,552.7 888.8,537.2 865.8,541.5" fill="#3d4a56" />
<polygon points="865.8,557.0 855.0,548.3 855.0,532.8 865.8,541.5" fill="#161b20" />
<polygon points="865.8,541.5 888.8,537.2 878.0,528.5 855.0,532.8" fill="#566674" />
<polygon points="946.8,541.8 969.8,537.5 969.8,522.0 946.8,526.3" fill="#3d4a56" />
<polygon points="946.8,541.8 936.0,533.1 936.0,517.6 946.8,526.3" fill="#161b20" />
<polygon points="946.8,526.3 969.8,522.0 959.0,513.3 936.0,517.6" fill="#566674" />
<polygon points="974.8,536.5 997.8,532.2 997.8,516.7 974.8,521.0" fill="#3d4a56" />
<polygon points="974.8,536.5 964.0,527.8 964.0,512.3 974.8,521.0" fill="#161b20" />
<polygon points="974.8,521.0 997.8,516.7 987.0,508.0 964.0,512.3" fill="#566674" />
<polygon points="1062.8,520.0 1085.8,515.7 1085.8,500.2 1062.8,504.5" fill="#3d4a56" />
<polygon points="1062.8,520.0 1052.0,511.3 1052.0,495.8 1062.8,504.5" fill="#161b20" />
<polygon points="1062.8,504.5 1085.8,500.2 1075.0,491.5 1052.0,495.8" fill="#566674" />
<polygon points="1090.8,514.7 1113.8,510.4 1113.8,494.9 1090.8,499.2" fill="#3d4a56" />
<polygon points="1090.8,514.7 1080.0,506.0 1080.0,490.5 1090.8,499.2" fill="#161b20" />
<polygon points="1090.8,499.2 1113.8,494.9 1103.0,486.2 1080.0,490.5" fill="#566674" />
<polygon points="1170.8,499.7 1193.8,495.4 1193.8,479.9 1170.8,484.2" fill="#3d4a56" />
<polygon points="1170.8,499.7 1160.0,491.0 1160.0,475.5 1170.8,484.2" fill="#161b20" />
<polygon points="1170.8,484.2 1193.8,479.9 1183.0,471.2 1160.0,475.5" fill="#566674" />
<path d="M654.2,589.1L652.0,589.5v8l2.2,-0.4 M656.3,588.7L658.5,588.3v8l-2.2,0.4 M667.2,586.7L665.0,587.1v8l2.2,-0.4 M669.4,586.3L671.6,585.8v8l-2.2,0.4 M680.3,584.2L678.1,584.6v8l2.2,-0.4 M682.4,583.8L684.6,583.4v8l-2.2,0.4 M693.3,581.8L691.1,582.2v8l2.2,-0.4 M695.5,581.4L697.7,580.9v8l-2.2,0.4 M706.4,579.3L704.2,579.7v8l2.2,-0.4 M708.5,578.9L710.7,578.5v8l-2.2,0.4 M719.4,576.8L717.2,577.3v8l2.2,-0.4 M721.5,576.4L723.8,576.0v8l-2.2,0.4 M732.5,574.4L730.3,574.8v8l2.2,-0.4 M734.6,574.0L736.8,573.6v8l-2.2,0.4 M745.5,571.9L743.3,572.4v8l2.2,-0.4 M747.6,571.5L749.8,571.1v8l-2.2,0.4 M758.6,569.5L756.4,569.9v8l2.2,-0.4 M760.7,569.1L762.9,568.7v8l-2.2,0.4 M771.6,567.0L769.4,567.5v8l2.2,-0.4 M773.7,566.6L775.9,566.2v8l-2.2,0.4 M784.7,564.6L782.5,565.0v8l2.2,-0.4 M786.8,564.2L789.0,563.8v8l-2.2,0.4 M797.7,562.1L795.5,562.5v8l2.2,-0.4 M799.8,561.7L802.0,561.3v8l-2.2,0.4 M810.7,559.7L808.5,560.1v8l2.2,-0.4 M812.9,559.3L815.1,558.9v8l-2.2,0.4 M823.8,557.2L821.6,557.6v8l2.2,-0.4 M825.9,556.8L828.1,556.4v8l-2.2,0.4 M836.8,554.8L834.6,555.2v8l2.2,-0.4 M839.0,554.4L841.2,554.0v8l-2.2,0.4 M849.9,552.3L847.7,552.7v8l2.2,-0.4 M852.0,551.9L854.2,551.5v8l-2.2,0.4 M862.9,549.9L860.7,550.3v8l2.2,-0.4 M865.0,549.5L867.2,549.1v8l-2.2,0.4 M876.0,547.4L873.8,547.8v8l2.2,-0.4 M878.1,547.0L880.3,546.6v8l-2.2,0.4 M889.0,545.0L886.8,545.4v8l2.2,-0.4 M891.1,544.6L893.3,544.2v8l-2.2,0.4 M902.1,542.5L899.9,542.9v8l2.2,-0.4 M904.2,542.1L906.4,541.7v8l-2.2,0.4 M915.1,540.1L912.9,540.5v8l2.2,-0.4 M917.2,539.7L919.4,539.2v8l-2.2,0.4 M928.2,537.6L926.0,538.0v8l2.2,-0.4 M930.3,537.2L932.5,536.8v8l-2.2,0.4 M941.2,535.2L939.0,535.6v8l2.2,-0.4 M943.3,534.8L945.5,534.3v8l-2.2,0.4 M954.2,532.7L952.0,533.1v8l2.2,-0.4 M956.4,532.3L958.6,531.9v8l-2.2,0.4 M967.3,530.2L965.1,530.7v8l2.2,-0.4 M969.4,529.9L971.6,529.4v8l-2.2,0.4 M980.3,527.8L978.1,528.2v8l2.2,-0.4 M982.5,527.4L984.7,527.0v8l-2.2,0.4 M993.4,525.3L991.2,525.8v8l2.2,-0.4 M995.5,524.9L997.7,524.5v8l-2.2,0.4 M1006.4,522.9L1004.2,523.3v8l2.2,-0.4 M1008.5,522.5L1010.8,522.1v8l-2.2,0.4 M1019.5,520.4L1017.3,520.9v8l2.2,-0.4 M1021.6,520.0L1023.8,519.6v8l-2.2,0.4 M1032.5,518.0L1030.3,518.4v8l2.2,-0.4 M1034.6,517.6L1036.8,517.2v8l-2.2,0.4 M1045.6,515.5L1043.4,515.9v8l2.2,-0.4 M1047.7,515.1L1049.9,514.7v8l-2.2,0.4 M1058.6,513.1L1056.4,513.5v8l2.2,-0.4 M1060.7,512.7L1062.9,512.3v8l-2.2,0.4 M1071.7,510.6L1069.5,511.0v8l2.2,-0.4 M1073.8,510.2L1076.0,509.8v8l-2.2,0.4 M1084.7,508.2L1082.5,508.6v8l2.2,-0.4 M1086.8,507.8L1089.0,507.4v8l-2.2,0.4 M1097.7,505.7L1095.5,506.1v8l2.2,-0.4 M1099.9,505.3L1102.1,504.9v8l-2.2,0.4 M1110.8,503.3L1108.6,503.7v8l2.2,-0.4 M1112.9,502.9L1115.1,502.5v8l-2.2,0.4 M1123.8,500.8L1121.6,501.2v8l2.2,-0.4 M1126.0,500.4L1128.2,500.0v8l-2.2,0.4 M1136.9,498.4L1134.7,498.8v8l2.2,-0.4 M1139.0,498.0L1141.2,497.6v8l-2.2,0.4 M1149.9,495.9L1147.7,496.3v8l2.2,-0.4 M1152.0,495.5L1154.2,495.1v8l-2.2,0.4 M1163.0,493.5L1160.8,493.9v8l2.2,-0.4 M1165.1,493.1L1167.3,492.6v8l-2.2,0.4 M1176.0,491.0L1173.8,491.4v8l2.2,-0.4 M1178.1,490.6L1180.3,490.2v8l-2.2,0.4 M1189.1,488.6L1186.9,489.0v8l2.2,-0.4 M1191.2,488.2L1193.4,487.7v8l-2.2,0.4 M1202.1,486.1L1199.9,486.5v8l2.2,-0.4 M1204.2,485.7L1206.4,485.3v8l-2.2,0.4 M1215.2,483.7L1213.0,484.1v8l2.2,-0.4 M1217.3,483.3L1219.5,482.8v8l-2.2,0.4 M1228.2,481.2L1226.0,481.6v8l2.2,-0.4" stroke="#0a0a0a" stroke-width="1.150" fill="none"/>
<line x1="652.0" y1="589.2" x2="1226.0" y2="481.3" stroke="#0a0a0a" stroke-width="1.100" stroke-dasharray="2.600 2.200"/>
<polygon points="896.0,502.5 931.5,496.5 931.5,501.5 896.0,507.5" fill="#cf4424" />
<polygon points="902.0,490.5 908.0,489.5 919.0,498.0 912.0,499.5" fill="#d8502c" />
<polygon points="1110.0,522.0 1135.0,518.5 1151.0,530.0 1126.0,534.0" fill="none" stroke="#f0a030" stroke-width="1.300"/>
<line x1="840.0" y1="578.0" x2="840.0" y2="598.0" stroke="#2a66c8" stroke-width="2" />
<polygon points="806.0,579.0 812.0,582.0 808.0,586.0" fill="#7ab0d0" />
<path d="M297.200,896.200 V874.800" stroke="#1c1c90" stroke-width="1.800"/><path d="M297.200,896.200 L321.200,892.700" stroke="#a01c1c" stroke-width="1.500"/><path d="M297.200,896.200 L290,890.400" stroke="#2c8c2c" stroke-width="1.200"/>
<text x="297.500" y="875" font-size="10" font-weight="bold" fill="#1c1c90" font-family="Liberation Sans,sans-serif">z</text><text x="287.500" y="890" font-size="10" font-weight="bold" fill="#2c8c2c" font-family="Liberation Sans,sans-serif">y</text><text x="320" y="894.500" font-size="9" font-weight="bold" fill="#a01c1c" font-family="Liberation Sans,sans-serif">x</text>
<path d="M515,735 l5,-4 l3,3 z" fill="#000"/>
</svg>
<svg style="left:0;top:0" width="280" height="1040" viewBox="0 0 280 1040">
<defs>
<linearGradient id="gTea" x1="0.200" y1="0" x2="0.700" y2="1"><stop offset="0" stop-color="#ffffff"/><stop offset="0.550" stop-color="#dce8f6"/><stop offset="1" stop-color="#6c98cc"/></linearGradient>
<radialGradient id="gSph" cx="0.400" cy="0.350" r="0.700"><stop offset="0" stop-color="#e8f0f8"/><stop offset="0.500" stop-color="#8fb0d0"/><stop offset="1" stop-color="#4a6a90"/></radialGradient>
<radialGradient id="gKh" cx="0.500" cy="0.500" r="0.550"><stop offset="0" stop-color="#a8a474"/><stop offset="0.700" stop-color="#d0cc98"/><stop offset="1" stop-color="#e6e2b4"/></radialGradient>
<radialGradient id="gBlue" cx="0.350" cy="0.350" r="0.700"><stop offset="0" stop-color="#9fd0ff"/><stop offset="0.500" stop-color="#2a80e0"/><stop offset="1" stop-color="#0a3a90"/></radialGradient>
<radialGradient id="gRed" cx="0.350" cy="0.350" r="0.700"><stop offset="0" stop-color="#ff9080"/><stop offset="0.600" stop-color="#c82818"/><stop offset="1" stop-color="#701008"/></radialGradient>
<radialGradient id="gGl" cx="0.500" cy="0.500" r="0.500"><stop offset="0.550" stop-color="#ffffc8" stop-opacity="0.900"/><stop offset="1" stop-color="#ffffc8" stop-opacity="0"/></radialGradient>
<radialGradient id="gBlob" cx="0.400" cy="0.350" r="0.700"><stop offset="0" stop-color="#b8d0f0"/><stop offset="0.600" stop-color="#6a8cc0"/><stop offset="1" stop-color="#3a5888"/></radialGradient>
<linearGradient id="gCone" x1="0" x2="1"><stop offset="0" stop-color="#888"/><stop offset="0.500" stop-color="#f4f4f4"/><stop offset="1" stop-color="#777"/></linearGradient>
<path id="fl" d="M3.500,0 V3.500 H0 Z" fill="#d0d0d0"/>
</defs>
<rect x="5" y="211.7" width="28" height="1.600" fill="#111"/>
<rect x="5" y="250.7" width="28" height="1.600" fill="#111"/>
<rect x="5" y="351.7" width="28" height="1.600" fill="#111"/>
<rect x="5" y="577.2" width="28" height="1.600" fill="#111"/>
<rect x="5" y="802.7" width="28" height="1.600" fill="#111"/>
<rect x="5" y="903.2" width="28" height="1.600" fill="#111"/>
<g stroke="#3c5878" stroke-width="0.500"><path d="M9,101.800 Q4.300,100.800 5,104.500 Q5.800,107.600 9.500,108" fill="none" stroke="#c8dcf0" stroke-width="1.800"/><path d="M23.200,104.500 Q26,103.500 27,99.800 L28.900,98.500 Q28.300,100.500 27.500,103 Q26.500,107.500 23.800,108.500 Z" fill="url(#gTea)"/><path d="M9,100.500 Q16,98 23,100.500 Q25.500,105 23.500,108.500 Q22.500,111.500 20,111.900 L12,111.900 Q9.500,111.500 8.500,108.500 Q6.500,105 9,100.500 Z" fill="url(#gTea)"/><path d="M11.500,100 Q16,95.800 20.500,100 Z" fill="#f4f8ff"/><circle cx="16" cy="96.400" r="1.400" fill="#e8f0fa"/></g><use href="#fl" x="28" y="114.500"/>
<rect x="5.500" y="122.500" width="23" height="23" fill="#cfd4dc" stroke="#222" stroke-width="1"/><rect x="6" y="123" width="22" height="3" fill="#4060a0"/><rect x="7.500" y="128" width="19" height="15.500" fill="#98a4b8"/><path d="M7.500,143.500 l8,-5 l11,5z" fill="#c8c8d0"/><circle cx="17" cy="135" r="3.600" fill="url(#gRed)"/><rect x="7" y="123.600" width="2" height="1.600" fill="#e04040"/><rect x="10" y="123.600" width="2" height="1.600" fill="#40c040"/>
<rect x="8.500" y="153.500" width="17.500" height="23" fill="#c8ccd4" stroke="#222" stroke-width="1"/><rect x="9" y="154" width="16.500" height="2.600" fill="#4060a0"/>
<rect x="10.500" y="159.5" width="13.500" height="3.600" fill="#3a3a3a"/><rect x="12" y="160.8" width="7" height="1" fill="#c8c8c8"/>
<rect x="10.500" y="164.5" width="13.500" height="3.600" fill="#3a3a3a"/><rect x="12" y="165.8" width="7" height="1" fill="#c8c8c8"/>
<rect x="10.500" y="169.5" width="13.500" height="3.600" fill="#3a3a3a"/><rect x="12" y="170.8" width="7" height="1" fill="#c8c8c8"/>
<rect x="5.500" y="185.500" width="23" height="22.500" fill="#c8ccd4" stroke="#222" stroke-width="1"/><rect x="6" y="186" width="22" height="2.600" fill="#4060a0"/>
<rect x="7.5" y="190.500" width="4" height="4" fill="#3a3a3a"/>
<rect x="12.8" y="190.500" width="4" height="4" fill="#3a3a3a"/>
<rect x="18.1" y="190.500" width="4" height="4" fill="#3a3a3a"/>
<rect x="23.4" y="190.500" width="4" height="4" fill="#3a3a3a"/>
<rect x="7.500" y="197" width="19.500" height="3.600" fill="#3a3a3a"/><rect x="9" y="198.3" width="12" height="1" fill="#ddd"/><rect x="15" y="197.3" width="1.500" height="3" fill="#eee"/>
<rect x="7.500" y="202.5" width="19.500" height="3.600" fill="#3a3a3a"/><rect x="9" y="203.8" width="12" height="1" fill="#ddd"/><rect x="15" y="202.8" width="1.500" height="3" fill="#eee"/>
<circle cx="13.500" cy="231" r="7" fill="#f8f080" stroke="#b8a020" stroke-width="0.800"/><circle cx="11.500" cy="229" r="3" fill="#ffffd8"/><rect x="11" y="238" width="5.500" height="5" fill="#b0b0b0" stroke="#555" stroke-width="0.600"/><path d="M10.500,243.500 h6.500 l-3.200,3z" fill="#ccc"/><rect x="15" y="233" width="14.500" height="9" fill="#9aa4b8" stroke="#223" stroke-width="0.800"/><rect x="15.500" y="233.500" width="13.500" height="2" fill="#3858a0"/><rect x="17" y="237.500" width="3" height="1.500" fill="#333"/><rect x="21.500" y="237.500" width="3" height="1.500" fill="#333"/><rect x="26" y="237.500" width="2" height="1.500" fill="#333"/>
<circle cx="11" cy="267.500" r="3.300" fill="#ddd" stroke="#222" stroke-width="1"/><circle cx="17.500" cy="267.500" r="3.300" fill="#ddd" stroke="#222" stroke-width="1"/><rect x="7.500" y="270.500" width="13.500" height="7.500" fill="#ccc" stroke="#222" stroke-width="1"/><rect x="9.500" y="273.500" width="6" height="2.500" fill="#c05050"/><path d="M21.500,274 l6.500,-6 v12z" fill="#999"/><path d="M14,278 l-6,7 M14,278 l6,7 M14,278 v4" stroke="#ddd" stroke-width="1.200" fill="none"/>
<path d="M17,294.500 a11,11 0 0 1 0,22 z" fill="url(#gCone)" stroke="#222" stroke-width="0.800"/><path d="M17,294.500 a5,11 0 0 0 0,22 a11,11 0 0 1 -8,-11 a11,11 0 0 1 8,-11z" fill="#777" stroke="#222" stroke-width="0.800"/><rect x="5.500" y="303" width="8.500" height="5" fill="#dfe8f0" stroke="#123" stroke-width="0.800"/><circle cx="7.500" cy="301" r="1.600" fill="#eef" stroke="#123" stroke-width="0.600"/><circle cx="11.500" cy="301" r="1.600" fill="#eef" stroke="#123" stroke-width="0.600"/><path d="M9.500,308 l-3,5 M9.500,308 l3,5" stroke="#dfe8f0" stroke-width="1"/>
<g transform="translate(-1.2 0)" fill="#30c8d0" stroke="#30c8d0"><circle cx="11" cy="329.500" r="3.600" fill="none" stroke-width="2.200"/><circle cx="19.500" cy="329.500" r="3.600" fill="none" stroke-width="2.200"/><rect x="7" y="334" width="15.500" height="8.500"/><path d="M22.500,338 l5,-3 v7z"/></g>
<g transform="translate(1.2 0)" fill="#e02020" stroke="#e02020"><circle cx="11" cy="329.500" r="3.600" fill="none" stroke-width="2.200"/><circle cx="19.500" cy="329.500" r="3.600" fill="none" stroke-width="2.200"/><rect x="7" y="334" width="15.500" height="8.500"/><path d="M22.500,338 l5,-3 v7z"/></g>
<rect x="8.500" y="335.500" width="12" height="5.500" fill="#d8d8d8"/><rect x="10.500" y="337" width="6" height="2.500" fill="#c04040"/>
<rect x="5" y="366" width="24" height="19" rx="4" fill="#ffffc0" opacity="0.250"/><rect x="7" y="368" width="20" height="15" rx="3" fill="#ffffc0" opacity="0.350"/><rect x="9" y="370" width="16" height="11" fill="#fbf8b4" stroke="#fffff0" stroke-width="0.800"/>
<path d="M6,412 a11,13 0 0 1 22,0 q-2,4 -11,4 t-11,-4z" fill="#e2e0b0"/><path d="M6,412 q11,-5 22,0 q-2,4 -11,4 t-11,-4z" fill="#c4c290"/>
<circle cx="17" cy="437.500" r="12" fill="url(#gGl)"/><circle cx="17" cy="437.500" r="7.600" fill="#f6f4d0" stroke="#fffff4" stroke-width="0.800"/>
<path d="M6,466 l3,0.500 l2,3 q1,-4 6,-4.500 q5,0.500 6,4 q3.500,-2.500 5,-1 q0,3 -4,5 q-1,3 -3,4 h-7 q-3,-1.500 -4,-5 q-2,-2 -4,-6z" fill="#5a5648" stroke="#d8d0b0" stroke-width="0.900"/><path d="M11,470 h12 M10.500,473 h13 M12,476 h10 M14,466 v11 M17,465 v12 M20,466 v11" stroke="#d8d0b0" stroke-width="0.600"/><rect x="15.500" y="462.500" width="3" height="2.500" fill="#d8d0b0"/>
<path d="M17,488 q2,0 3,3 l7.500,14 q-3,3.500 -10.500,3.500 t-10.500,-3.500 l7.500,-14 q1,-3 3,-3z" fill="url(#gCone)"/><path d="M17,489 l3,17 h-6z" fill="#fff" opacity="0.600"/>
<path d="M25.0,530.0 L28.5,530.0 M22.7,535.7 L25.1,538.1 M17.0,538.0 L17.0,541.5 M11.3,535.7 L8.9,538.1 M9.0,530.0 L5.5,530.0 M11.3,524.3 L8.9,521.9 M17.0,522.0 L17.0,518.5 M22.7,524.3 L25.1,521.9" stroke="#f8c020" stroke-width="2.200"/><circle cx="17" cy="530" r="6.800" fill="#ffd820" stroke="#f0a010" stroke-width="1"/><circle cx="15.500" cy="528.500" r="3" fill="#fff080"/>
<circle cx="17" cy="561" r="10.500" fill="url(#gKh)"/>
<rect x="7.0" y="590.0" width="3.800" height="3.800" fill="#7aa0d0" stroke="#2a4a78" stroke-width="0.500" transform="rotate(20 9.0 592.0)"/>
<rect x="8.5" y="596.5" width="3.800" height="3.800" fill="#7aa0d0" stroke="#2a4a78" stroke-width="0.500" transform="rotate(20 10.5 598.5)"/>
<rect x="10.0" y="603.0" width="3.800" height="3.800" fill="#7aa0d0" stroke="#2a4a78" stroke-width="0.500" transform="rotate(20 12.0 605.0)"/>
<rect x="12.2" y="591.0" width="3.800" height="3.800" fill="#7aa0d0" stroke="#2a4a78" stroke-width="0.500" transform="rotate(20 14.2 593.0)"/>
<rect x="13.7" y="597.5" width="3.800" height="3.800" fill="#7aa0d0" stroke="#2a4a78" stroke-width="0.500" transform="rotate(20 15.7 599.5)"/>
<rect x="15.2" y="604.0" width="3.800" height="3.800" fill="#7aa0d0" stroke="#2a4a78" stroke-width="0.500" transform="rotate(20 17.2 606.0)"/>
<rect x="17.4" y="592.0" width="3.800" height="3.800" fill="#7aa0d0" stroke="#2a4a78" stroke-width="0.500" transform="rotate(20 19.4 594.0)"/>
<rect x="18.9" y="598.5" width="3.800" height="3.800" fill="#7aa0d0" stroke="#2a4a78" stroke-width="0.500" transform="rotate(20 20.9 600.5)"/>
<rect x="20.4" y="605.0" width="3.800" height="3.800" fill="#7aa0d0" stroke="#2a4a78" stroke-width="0.500" transform="rotate(20 22.4 607.0)"/>
<rect x="22.6" y="593.0" width="3.800" height="3.800" fill="#7aa0d0" stroke="#2a4a78" stroke-width="0.500" transform="rotate(20 24.6 595.0)"/>
<rect x="24.1" y="599.5" width="3.800" height="3.800" fill="#7aa0d0" stroke="#2a4a78" stroke-width="0.500" transform="rotate(20 26.1 601.5)"/>
<rect x="25.6" y="606.0" width="3.800" height="3.800" fill="#7aa0d0" stroke="#2a4a78" stroke-width="0.500" transform="rotate(20 27.6 608.0)"/>
<path d="M10,635 L22,627" stroke="#b0b0c0" stroke-width="3.500"/><circle cx="10.500" cy="635" r="5.200" fill="url(#gSph)"/><circle cx="22" cy="627" r="5.200" fill="url(#gRed)"/>
<path d="M8,671.500 h18.500 l-4,-11 h-10.500z M8,671.500 l14.500,-11 M26.500,671.500 l-14.500,-11 M17,666 v-13 M14,656 l3,-3.500 l3,3.500" fill="none" stroke="#a8cce8" stroke-width="1.300"/>
<polygon points="27.5,694.0 25.1,696.9 25.0,700.7 21.3,701.4 18.8,704.3 15.5,702.5 11.8,703.1 10.4,699.5 7.1,697.6 8.4,694.0 7.1,690.4 10.4,688.5 11.7,684.9 15.5,685.5 18.8,683.7 21.3,686.6 25.0,687.3 25.1,691.1" fill="url(#gBlob)"/>
<path d="M8,733 q2,-10 -1,-14 q5,4 5,13 q0,-12 3,-18 q1,8 1,18 q2,-12 6,-17 q-2,9 -2,17 q3,-8 7,-11 q-4,7 -4,13 z" fill="#4ca030" stroke="#2a6a18" stroke-width="0.500"/><path d="M12,733 q1,-10 3,-16 M17,733 q1,-8 4,-14" stroke="#90e060" stroke-width="0.800" fill="none"/>
<path d="M6,747 q8,-4 14,2 q6,6 5,14 q-1,3 -3,3 q2,-8 -3,-12 q-6,-4 -13,-7z" fill="#c8a878" stroke="#8a6a40" stroke-width="0.600"/><path d="M8,748 q10,0 15,14" stroke="#f0d8b0" stroke-width="0.800" fill="none"/><text x="5.500" y="765.500" font-size="9.500" font-family="Liberation Sans,sans-serif" fill="#fff">HF</text>
<circle cx="18" cy="786" r="10" fill="#8a7458"/><path d="M10,782 q8,-6 16,0 M9,787 q9,-6 18,0 M11,792 q7,-5 14,0 M14,777 q-2,9 0,18 M19,776 q2,10 0,20 M23,778 q3,8 0,16" stroke="#d8c4a0" stroke-width="0.700" fill="none"/><text x="5.500" y="797" font-size="9.500" font-family="Liberation Sans,sans-serif" fill="#fff">0x</text>
<circle cx="17" cy="825" r="10.500" fill="url(#gSph)"/><use href="#fl" x="28" y="837"/>
<rect x="7" y="846" width="14" height="14" fill="#c8c8c8" stroke="#555" stroke-width="0.600"/><circle cx="13" cy="852" r="4.600" fill="url(#gSph)"/><rect x="17" y="856" width="10" height="10" fill="#e8e8e8" stroke="#555" stroke-width="0.600"/><circle cx="22" cy="861.500" r="2.600" fill="#e08030"/><path d="M20,848 l6,5 M20,848 v4 M20,848 h4" stroke="#fff" stroke-width="1.200"/><use href="#fl" x="28" y="868"/>
<rect x="9" y="876.500" width="18.500" height="19" fill="none" stroke="#e03030" stroke-width="1.300" stroke-dasharray="3 1.500"/><ellipse cx="22" cy="889" rx="4.500" ry="6" fill="#000"/><circle cx="13" cy="891" r="7.200" fill="url(#gBlue)"/>
<rect x="7" y="916.500" width="12.500" height="17.500" fill="#dde4f0" stroke="#234" stroke-width="0.800"/><rect x="7.500" y="917" width="11.500" height="2.500" fill="#3858a0"/>
<rect x="8.500" y="921.5" width="9" height="1" fill="#4a6a98"/>
<rect x="8.500" y="924" width="9" height="1" fill="#4a6a98"/>
<rect x="8.500" y="926.5" width="9" height="1" fill="#4a6a98"/>
<rect x="8.500" y="929" width="9" height="1" fill="#4a6a98"/>
<rect x="8.500" y="931.5" width="9" height="1" fill="#4a6a98"/>
<rect x="18" y="925.500" width="9.500" height="10" fill="#dde4f0" stroke="#234" stroke-width="0.800"/><path d="M24,930.500 h-6 m2.500,-2.500 l-2.500,2.500 l2.500,2.500" stroke="#e03020" stroke-width="1.400" fill="none"/>
<circle cx="17" cy="957" r="10" fill="#3e444a" stroke="#6e7e8e" stroke-width="1.500"/><text x="12.300" y="963" font-size="16" font-weight="bold" font-family="Liberation Sans,sans-serif" fill="#7c8a98">?</text>
<rect x="44" y="777" width="19.500" height="19.500" rx="3" fill="#555"/><path d="M51,781.500 l6,5.300 l-6,5.300z" fill="#f0f0f0"/>
<rect x="38" y="807" width="36" height="45" rx="2.500" fill="#3b7bd4"/><rect x="41.500" y="815" width="30.500" height="27.500" rx="2" fill="#5a6884" stroke="#8a9ab8" stroke-width="1"/>
<path d="M38,884 a16,14 0 0 1 32,0z" fill="#8c8c8c"/><path d="M45,883.500 q-1,-3.500 3,-3.500 q1,-2.500 4,-2 q3,-2 5.500,0.500 q4,-1 4.500,2 q3,0 2.500,3z" fill="#fff"/>
<circle cx="54" cy="904" r="13.300" fill="none" stroke="#727272" stroke-width="1.600"/><path d="M54,896.500 v15 M47.500,900.300 l13,7.500 M47.500,907.800 l13,-7.500" stroke="#a0a0a0" stroke-width="2.600"/><circle cx="54" cy="904" r="2.200" fill="#444"/>
<g font-family="Liberation Sans,Noto Sans CJK SC,sans-serif" font-size="12" fill="#f0f0f0">
<text x="119" y="229">选择</text><text x="163" y="229">显示</text><text x="207" y="229">编辑</text>
<text x="255.500" y="248" font-size="14" fill="#6464b4">»</text><text x="256" y="835" font-size="14" fill="#6464b4">»</text>
<rect x="104" y="268" width="22" height="20" fill="#5b88c8"/>
<rect x="104" y="291" width="22" height="20" fill="#5b88c8"/>
<rect x="104" y="314" width="22" height="20" fill="#5b88c8"/>
<rect x="104" y="337" width="22" height="20" fill="#5b88c8"/>
<rect x="104" y="360" width="22" height="20" fill="#5b88c8"/>
<rect x="104" y="383" width="22" height="20" fill="#5b88c8"/>
<rect x="104" y="406" width="22" height="20" fill="#5b88c8"/>
<rect x="104" y="429" width="22" height="20" fill="#5b88c8"/>
<rect x="104" y="452" width="22" height="20" fill="#5b88c8"/>
<rect x="104" y="475" width="22" height="20" fill="#5b88c8"/>
<rect x="104" y="498" width="22" height="20" fill="#5b88c8"/>
<rect x="104" y="521" width="22" height="20" fill="#5b88c8"/>
<circle cx="115" cy="278" r="5.800" fill="#d6d6d6" stroke="#333" stroke-width="0.800"/>
<circle cx="113" cy="299" r="5" fill="#d6d6d6" stroke="#333" stroke-width="0.900"/><rect x="113.5" y="300" width="8" height="8" fill="#d6d6d6" stroke="#333" stroke-width="0.900"/><path d="M113.5,303 a5,5 0 0 0 4.500,-3" stroke="#333" stroke-width="0.900" fill="none"/>
<path d="M115,316.5 a5,5 0 0 1 3,9 v2 h-6 v-2 a5,5 0 0 1 3,-9z" fill="#d6d6d6" stroke="#333" stroke-width="0.800"/><rect x="112.5" y="328.6" width="5" height="1.300" fill="#d6d6d6"/><rect x="113.2" y="330.6" width="3.600" height="1.200" fill="#d6d6d6"/>
<rect x="107.5" y="342.5" width="11" height="9.500" rx="1.500" fill="#d6d6d6" stroke="#333" stroke-width="0.800"/><path d="M118.5,347 l4,-3.500 v8z" fill="#d6d6d6" stroke="#333" stroke-width="0.800"/>
<path d="M109,363 l13,14 h-13z" fill="#d6d6d6" stroke="#333" stroke-width="0.900"/><path d="M111.5,371 l4,4 h-4z" fill="#5b88c8" stroke="#333" stroke-width="0.700"/>
<path d="M108,389.5 q3.500,-4 7,-1 t7,-1.500" stroke="#333" stroke-width="2.800" fill="none"/><path d="M108,389.5 q3.500,-4 7,-1 t7,-1.500" stroke="#d6d6d6" stroke-width="1.500" fill="none"/>
<path d="M108,394 q3.500,-4 7,-1 t7,-1.500" stroke="#333" stroke-width="2.800" fill="none"/><path d="M108,394 q3.500,-4 7,-1 t7,-1.500" stroke="#d6d6d6" stroke-width="1.500" fill="none"/>
<path d="M108,398.5 q3.500,-4 7,-1 t7,-1.500" stroke="#333" stroke-width="2.800" fill="none"/><path d="M108,398.5 q3.500,-4 7,-1 t7,-1.500" stroke="#d6d6d6" stroke-width="1.500" fill="none"/>
<rect x="108" y="409" width="14" height="14" fill="#5b88c8" stroke="#1f5a5a" stroke-width="2.200"/><rect x="108" y="409" width="14" height="14" fill="none" stroke="#58c8c0" stroke-width="1"/><circle cx="113.5" cy="414.5" r="3.600" fill="#d6d6d6" stroke="#333" stroke-width="0.700"/><rect x="114.5" y="415.5" width="5" height="5" fill="#d6d6d6" stroke="#333" stroke-width="0.700"/>
<circle cx="115" cy="438.5" r="7" fill="#d6d6d6" stroke="#333" stroke-width="0.800"/><path d="M113.7,435 h2.600 v3.500 h2.200 l-3.500,3.500 l-3.500,-3.500 h2.200z" fill="#38a8a0" stroke="#144" stroke-width="0.500"/><rect x="110.5" y="442.8" width="9" height="2" fill="#38a8a0" stroke="#144" stroke-width="0.500"/>
<path d="M110,457 l11,10 l-1.500,1 l-11,-8z" fill="#d6d6d6" stroke="#333" stroke-width="0.800"/><circle cx="109.5" cy="456.5" r="2.400" fill="#d6d6d6" stroke="#333" stroke-width="0.800"/>
<rect x="108.5" y="479.5" width="13" height="3" fill="#d6d6d6" stroke="#333" stroke-width="0.800"/><rect x="109.5" y="482.5" width="11" height="8" fill="#d6d6d6" stroke="#333" stroke-width="0.800"/><rect x="111.5" y="484.2" width="7" height="1.800" fill="#333"/>
<path d="M115,508 L120.6,511.2 M115,508 L115.0,514.5 M115,508 L109.4,511.2 M115,508 L109.4,504.8 M115,508 L115.0,501.5 M115,508 L120.6,504.8" stroke="#333" stroke-width="3"/><path d="M115,508 L120.6,511.2 M115,508 L115.0,514.5 M115,508 L109.4,511.2 M115,508 L109.4,504.8 M115,508 L115.0,501.5 M115,508 L120.6,504.8" stroke="#d6d6d6" stroke-width="1.600"/><circle cx="115" cy="508" r="3.800" fill="none" stroke="#d6d6d6" stroke-width="1.200"/><circle cx="115" cy="508" r="6.300" fill="none" stroke="#d6d6d6" stroke-width="1" stroke-dasharray="2 1.300"/>
<path d="M107.65,531 q7.3500000000000005,-7.7700000000000005 14.700000000000001,0 q-7.3500000000000005,7.7700000000000005 -14.700000000000001,0z" fill="#3a3a3a" stroke="#d6d6d6" stroke-width="1.300"/><circle cx="115" cy="530.7" r="2.7300000000000004" fill="#d6d6d6"/><circle cx="115.8" cy="530" r="1.05" fill="#3a3a3a"/>
<rect x="109.500" y="552" width="10.500" height="14" fill="#d8d8d8" stroke="#2a2a2a" stroke-width="0.800"/>
<rect x="111.500" y="555.0" width="6.5" height="1.100" fill="#2a2a2a"/>
<rect x="111.500" y="557.6" width="4.5" height="1.100" fill="#2a2a2a"/>
<rect x="111.500" y="560.2" width="6.5" height="1.100" fill="#2a2a2a"/>
<rect x="111.500" y="562.8" width="4.5" height="1.100" fill="#2a2a2a"/>
<rect x="109.500" y="598" width="10.500" height="14" fill="#d8d8d8" stroke="#2a2a2a" stroke-width="0.800"/>
<rect x="111.500" y="601.0" width="6.5" height="1.100" fill="#2a2a2a"/>
<rect x="111.500" y="603.6" width="4.5" height="1.100" fill="#2a2a2a"/>
<rect x="111.500" y="606.2" width="6.5" height="1.100" fill="#2a2a2a"/>
<rect x="111.500" y="608.8" width="4.5" height="1.100" fill="#2a2a2a"/>
<rect x="109.500" y="576" width="11" height="13.500" fill="#d8d8d8"/>
<rect x="106" y="622.500" width="17" height="1" fill="#666"/><rect x="106" y="546.500" width="17" height="1" fill="#666"/>
<path d="M108.500,628 h12 l-4.600,5.500 v6 l-2.800,-1.500 v-4.500z" fill="#8a8a8a"/><circle cx="118.500" cy="637" r="2.600" fill="none" stroke="#9a9a9a" stroke-width="1.400"/>
<path d="M108.500,651.500 h12.500 l-4.800,5.800 v6 l-2.900,-1.500 v-4.500z" fill="#e6e6e6"/>
<path d="M108.500,687 v-8.500 h2.500 v-2 h2.500 v2 h3 v-2 h2.500 v2 h2.500 v8.500z" fill="none" stroke="#e0e0e0" stroke-width="1.200"/>
<rect x="129.500" y="265.500" width="137" height="19.500" fill="#4b4b4b" stroke="#5c5c5c" stroke-width="1"/><text x="132" y="279.500" font-size="12">名称(按升序排序)</text>
<clipPath id="cpT"><rect x="179.500" y="286" width="86.500" height="253"/></clipPath>
<path d="M138.500,296 V530" stroke="#8a8a8a" stroke-width="1" stroke-dasharray="1 2"/>
<rect x="179.500" y="287" width="86.500" height="17.500" fill="#565656"/>
<path d="M139,296 H147" stroke="#8a8a8a" stroke-width="1" stroke-dasharray="1 2"/>
<path d="M148.84,295.5 q6.16,-6.5120000000000005 12.32,0 q-6.16,6.5120000000000005 -12.32,0z" fill="#3a3a3a" stroke="#e4e4e4" stroke-width="1.300"/><circle cx="155" cy="295.2" r="2.2880000000000003" fill="#e4e4e4"/><circle cx="155.8" cy="294.5" r="0.88" fill="#3a3a3a"/>
<circle cx="170" cy="295" r="5.300" fill="#dadada"/>
<text x="183.5" y="300" font-size="12.150" clip-path="url(#cpT)">Floor 100 2 [70</text>
<rect x="179.500" y="305" width="86.500" height="17.500" fill="#4b4b4b"/>
<path d="M139,314 H147" stroke="#8a8a8a" stroke-width="1" stroke-dasharray="1 2"/>
<path d="M148.84,313.5 q6.16,-6.5120000000000005 12.32,0 q-6.16,6.5120000000000005 -12.32,0z" fill="#3a3a3a" stroke="#e4e4e4" stroke-width="1.300"/><circle cx="155" cy="313.2" r="2.2880000000000003" fill="#e4e4e4"/><circle cx="155.8" cy="312.5" r="0.88" fill="#3a3a3a"/>
<circle cx="170" cy="313" r="5.300" fill="#dadada"/>
<text x="183.5" y="318" font-size="12.150" clip-path="url(#cpT)">Floor 100 2 [70</text>
<rect x="179.500" y="323" width="86.500" height="17.500" fill="#565656"/>
<path d="M139,332 H147" stroke="#8a8a8a" stroke-width="1" stroke-dasharray="1 2"/>
<path d="M148.84,331.5 q6.16,-6.5120000000000005 12.32,0 q-6.16,6.5120000000000005 -12.32,0z" fill="#3a3a3a" stroke="#e4e4e4" stroke-width="1.300"/><circle cx="155" cy="331.2" r="2.2880000000000003" fill="#e4e4e4"/><circle cx="155.8" cy="330.5" r="0.88" fill="#3a3a3a"/>
<circle cx="170" cy="331" r="5.300" fill="#dadada"/>
<text x="183.5" y="336" font-size="12.150" clip-path="url(#cpT)">Floor 100 2 [70</text>
<rect x="179.500" y="341" width="86.500" height="17.500" fill="#565656"/>
<path d="M139,350 H147" stroke="#8a8a8a" stroke-width="1" stroke-dasharray="1 2"/>
<path d="M148.84,349.5 q6.16,-6.5120000000000005 12.32,0 q-6.16,6.5120000000000005 -12.32,0z" fill="#3a3a3a" stroke="#e4e4e4" stroke-width="1.300"/><circle cx="155" cy="349.2" r="2.2880000000000003" fill="#e4e4e4"/><circle cx="155.8" cy="348.5" r="0.88" fill="#3a3a3a"/>
<path d="M136,345 l6.500,5 l-6.500,5z" fill="#fff"/>
<rect x="163.500" y="342" width="13.500" height="14" fill="#333" stroke="#4fb0a8" stroke-width="1.100"/><circle cx="168.500" cy="347" r="3.300" fill="#e0e0e0"/><rect x="169.500" y="348.5" width="5" height="5" fill="#e0e0e0" stroke="#333" stroke-width="0.600"/>
<text x="183.5" y="354" font-size="12.150" clip-path="url(#cpT)">guizi</text>
<rect x="179.500" y="359" width="86.500" height="17.500" fill="#4b4b4b"/>
<path d="M139,368 H147" stroke="#8a8a8a" stroke-width="1" stroke-dasharray="1 2"/>
<path d="M148.84,367.5 q6.16,-6.5120000000000005 12.32,0 q-6.16,6.5120000000000005 -12.32,0z" fill="#3a3a3a" stroke="#e4e4e4" stroke-width="1.300"/><circle cx="155" cy="367.2" r="2.2880000000000003" fill="#e4e4e4"/><circle cx="155.8" cy="366.5" r="0.88" fill="#3a3a3a"/>
<circle cx="170" cy="367" r="5.300" fill="#dadada"/>
<text x="183.5" y="372" font-size="12.150" clip-path="url(#cpT)">Rectangle231</text>
<rect x="179.500" y="377" width="86.500" height="17.500" fill="#565656"/>
<path d="M139,386 H147" stroke="#8a8a8a" stroke-width="1" stroke-dasharray="1 2"/>
<path d="M148.84,385.5 q6.16,-6.5120000000000005 12.32,0 q-6.16,6.5120000000000005 -12.32,0z" fill="#3a3a3a" stroke="#e4e4e4" stroke-width="1.300"/><circle cx="155" cy="385.2" r="2.2880000000000003" fill="#e4e4e4"/><circle cx="155.8" cy="384.5" r="0.88" fill="#3a3a3a"/>
<circle cx="170" cy="385" r="5.300" fill="#dadada"/>
<text x="183.5" y="390" font-size="12.150" clip-path="url(#cpT)">Rectangle232</text>
<rect x="179.500" y="395" width="86.500" height="17.500" fill="#4b4b4b"/>
<path d="M139,404 H147" stroke="#8a8a8a" stroke-width="1" stroke-dasharray="1 2"/>
<path d="M148.84,403.5 q6.16,-6.5120000000000005 12.32,0 q-6.16,6.5120000000000005 -12.32,0z" fill="#3a3a3a" stroke="#e4e4e4" stroke-width="1.300"/><circle cx="155" cy="403.2" r="2.2880000000000003" fill="#e4e4e4"/><circle cx="155.8" cy="402.5" r="0.88" fill="#3a3a3a"/>
<path d="M136,399 l6.500,5 l-6.500,5z" fill="#fff"/>
<rect x="163.500" y="396" width="13.500" height="14" fill="#333" stroke="#4fb0a8" stroke-width="1.100"/><circle cx="168.500" cy="401" r="3.300" fill="#e0e0e0"/><rect x="169.500" y="402.5" width="5" height="5" fill="#e0e0e0" stroke="#333" stroke-width="0.600"/>
<text x="183.5" y="408" font-size="12.150" clip-path="url(#cpT)">shinei</text>
<rect x="179.500" y="413" width="86.500" height="17.500" fill="#565656"/>
<path d="M139,422 H147" stroke="#8a8a8a" stroke-width="1" stroke-dasharray="1 2"/>
<path d="M148.84,421.5 q6.16,-6.5120000000000005 12.32,0 q-6.16,6.5120000000000005 -12.32,0z" fill="#3a3a3a" stroke="#e4e4e4" stroke-width="1.300"/><circle cx="155" cy="421.2" r="2.2880000000000003" fill="#e4e4e4"/><circle cx="155.8" cy="420.5" r="0.88" fill="#3a3a3a"/>
<circle cx="170" cy="421" r="5.300" fill="#dadada"/>
<text x="185" y="426" font-size="12.150" clip-path="url(#cpT)">Text001</text>
<rect x="179.500" y="431" width="86.500" height="17.500" fill="#4b4b4b"/>
<path d="M139,440 H147" stroke="#8a8a8a" stroke-width="1" stroke-dasharray="1 2"/>
<path d="M148.84,439.5 q6.16,-6.5120000000000005 12.32,0 q-6.16,6.5120000000000005 -12.32,0z" fill="#3a3a3a" stroke="#e4e4e4" stroke-width="1.300"/><circle cx="155" cy="439.2" r="2.2880000000000003" fill="#e4e4e4"/><circle cx="155.8" cy="438.5" r="0.88" fill="#3a3a3a"/>
<circle cx="170" cy="439" r="5.300" fill="#dadada"/>
<text x="183.5" y="444" font-size="12.150" clip-path="url(#cpT)">对象007</text>
<rect x="179.500" y="449" width="86.500" height="17.500" fill="#565656"/>
<path d="M139,458 H147" stroke="#8a8a8a" stroke-width="1" stroke-dasharray="1 2"/>
<path d="M148.84,457.5 q6.16,-6.5120000000000005 12.32,0 q-6.16,6.5120000000000005 -12.32,0z" fill="#3a3a3a" stroke="#e4e4e4" stroke-width="1.300"/><circle cx="155" cy="457.2" r="2.2880000000000003" fill="#e4e4e4"/><circle cx="155.8" cy="456.5" r="0.88" fill="#3a3a3a"/>
<path d="M136,453 l6.500,5 l-6.500,5z" fill="#fff"/>
<rect x="163.500" y="450" width="13.500" height="14" fill="#333" stroke="#4fb0a8" stroke-width="1.100"/><circle cx="168.500" cy="455" r="3.300" fill="#e0e0e0"/><rect x="169.500" y="456.5" width="5" height="5" fill="#e0e0e0" stroke="#333" stroke-width="0.600"/>
<text x="183.5" y="462" font-size="12.150" clip-path="url(#cpT)">二层</text>
<rect x="179.500" y="467" width="86.500" height="17.500" fill="#4b4b4b"/>
<path d="M139,476 H147" stroke="#8a8a8a" stroke-width="1" stroke-dasharray="1 2"/>
<path d="M148.84,475.5 q6.16,-6.5120000000000005 12.32,0 q-6.16,6.5120000000000005 -12.32,0z" fill="#3a3a3a" stroke="#e4e4e4" stroke-width="1.300"/><circle cx="155" cy="475.2" r="2.2880000000000003" fill="#e4e4e4"/><circle cx="155.8" cy="474.5" r="0.88" fill="#3a3a3a"/>
<path d="M136,471 l6.500,5 l-6.500,5z" fill="#fff"/>
<rect x="163.500" y="468" width="13.500" height="14" fill="#333" stroke="#4fb0a8" stroke-width="1.100"/><circle cx="168.500" cy="473" r="3.300" fill="#e0e0e0"/><rect x="169.500" y="474.5" width="5" height="5" fill="#e0e0e0" stroke="#333" stroke-width="0.600"/>
<text x="183.5" y="480" font-size="12.150" clip-path="url(#cpT)">龙门吊</text>
<rect x="179.500" y="485" width="86.500" height="17.500" fill="#565656"/>
<path d="M139,494 H147" stroke="#8a8a8a" stroke-width="1" stroke-dasharray="1 2"/>
<path d="M148.84,493.5 q6.16,-6.5120000000000005 12.32,0 q-6.16,6.5120000000000005 -12.32,0z" fill="#3a3a3a" stroke="#e4e4e4" stroke-width="1.300"/><circle cx="155" cy="493.2" r="2.2880000000000003" fill="#e4e4e4"/><circle cx="155.8" cy="492.5" r="0.88" fill="#3a3a3a"/>
<path d="M136,489 l6.500,5 l-6.500,5z" fill="#fff"/>
<rect x="163.500" y="486" width="13.500" height="14" fill="#333" stroke="#4fb0a8" stroke-width="1.100"/><circle cx="168.500" cy="491" r="3.300" fill="#e0e0e0"/><rect x="169.500" y="492.5" width="5" height="5" fill="#e0e0e0" stroke="#333" stroke-width="0.600"/>
<text x="183.5" y="498" font-size="12.150" clip-path="url(#cpT)">摄像头</text>
<rect x="179.500" y="503" width="86.500" height="17.500" fill="#4b4b4b"/>
<path d="M139,512 H147" stroke="#8a8a8a" stroke-width="1" stroke-dasharray="1 2"/>
<path d="M148.84,511.5 q6.16,-6.5120000000000005 12.32,0 q-6.16,6.5120000000000005 -12.32,0z" fill="#3a3a3a" stroke="#e4e4e4" stroke-width="1.300"/><circle cx="155" cy="511.2" r="2.2880000000000003" fill="#e4e4e4"/><circle cx="155.8" cy="510.5" r="0.88" fill="#3a3a3a"/>
<path d="M136,507 l6.500,5 l-6.500,5z" fill="#fff"/>
<rect x="163.500" y="504" width="13.500" height="14" fill="#333" stroke="#4fb0a8" stroke-width="1.100"/><circle cx="168.500" cy="509" r="3.300" fill="#e0e0e0"/><rect x="169.500" y="510.5" width="5" height="5" fill="#e0e0e0" stroke="#333" stroke-width="0.600"/>
<text x="183.5" y="516" font-size="12.150" clip-path="url(#cpT)">一层</text>
<rect x="179.500" y="521" width="86.500" height="17.500" fill="#565656"/>
<path d="M139,530 H147" stroke="#8a8a8a" stroke-width="1" stroke-dasharray="1 2"/>
<path d="M148.84,529.5 q6.16,-6.5120000000000005 12.32,0 q-6.16,6.5120000000000005 -12.32,0z" fill="#3a3a3a" stroke="#e4e4e4" stroke-width="1.300"/><circle cx="155" cy="529.2" r="2.2880000000000003" fill="#e4e4e4"/><circle cx="155.8" cy="528.5" r="0.88" fill="#3a3a3a"/>
<path d="M136,525 l6.500,5 l-6.500,5z" fill="#fff"/>
<rect x="163.500" y="522" width="13.500" height="14" fill="#333" stroke="#4fb0a8" stroke-width="1.100"/><circle cx="168.500" cy="527" r="3.300" fill="#e0e0e0"/><rect x="169.500" y="528.5" width="5" height="5" fill="#e0e0e0" stroke="#333" stroke-width="0.600"/>
<text x="183.5" y="534" font-size="12.150" clip-path="url(#cpT)">组007</text>
<rect x="129" y="805.500" width="137" height="17.500" fill="#f0f0f0"/><rect x="146" y="814" width="31" height="1.600" fill="#555"/>
<rect x="128.500" y="286" width="1" height="520" fill="#3a3a3a"/>
</g>
<rect x="44" y="929" width="14" height="16" rx="2" fill="#5c5c5c"/><rect x="60" y="929" width="123" height="16" rx="2" fill="#646464"/><rect x="185" y="929" width="14" height="16" rx="2" fill="#5c5c5c"/>
<path d="M53,933 l-4,4 l4,4 M190,933 l4,4 l-4,4" stroke="#e8e8e8" stroke-width="1.200" fill="none"/>
<text x="99.500" y="941" font-size="11" font-family="Liberation Mono,monospace" fill="#e4e4e4" letter-spacing="-0.700">0 / 100</text>
<rect x="4.500" y="981.500" width="97.500" height="22" fill="#dcc5c5" stroke="#b4b4b4" stroke-width="1"/><rect x="4.500" y="1004.500" width="97.500" height="22" fill="#fdfdfd" stroke="#aaa" stroke-width="1"/>
<text x="9.500" y="1019" font-size="11" font-family="Liberation Mono,Noto Sans CJK SC,monospace" fill="#9a9a9a">MAXScript 迷·</text>
<rect x="106" y="979" width="1.600" height="50" fill="#111"/>
<g font-family="Liberation Sans,Noto Sans CJK SC,sans-serif" font-size="12" fill="#f2f2f2"><text x="112" y="998.500">未选定任何对象</text><text x="112" y="1023.500">单击或单击并拖动以选择对象</text></g>
<circle cx="38" cy="1043" r="5.500" fill="#e88a98"/>
</svg>
<svg style="left:0;top:0" width="1920" height="1040" viewBox="0 0 1920 1040">
<defs><path id="fly2" d="M3.500,0 V3.500 H0 Z" fill="#d0d0d0"/></defs>
<path d="M1548,238 V216 q0,-4 4,-4 h22 q4,0 4,4 V238z" fill="#3b3b3b"/>
<path d="M1580,238 V216 q0,-4 4,-4 h22 q4,0 4,4 V238z" fill="#3b3b3b"/>
<path d="M1612,238 V216 q0,-4 4,-4 h22 q4,0 4,4 V238z" fill="#3b3b3b"/>
<path d="M1644,238 V216 q0,-4 4,-4 h22 q4,0 4,4 V238z" fill="#3b3b3b"/>
<path d="M1676,238 V216 q0,-4 4,-4 h22 q4,0 4,4 V238z" fill="#3b3b3b"/>
<path d="M1517,238.500 V216 q0,-4 4,-4 h21.500 q4,0 4,4 V238.500" fill="#444" stroke="#545454" stroke-width="1"/>
<path d="M1523.800,225 h16.600 M1532.100,216.700 v16.600" stroke="#f4f4f4" stroke-width="2.300"/>
<rect x="1557" y="218.500" width="14" height="14" fill="none" stroke="#46c2c2" stroke-width="1" stroke-dasharray="2.500 1.500" opacity="0.850"/>
<rect x="1555.5" y="217.0" width="3" height="3" fill="#3b3b3b" stroke="#46c2c2" stroke-width="0.800"/>
<rect x="1569.5" y="217.0" width="3" height="3" fill="#3b3b3b" stroke="#46c2c2" stroke-width="0.800"/>
<rect x="1555.5" y="231.0" width="3" height="3" fill="#3b3b3b" stroke="#46c2c2" stroke-width="0.800"/>
<rect x="1569.5" y="231.0" width="3" height="3" fill="#3b3b3b" stroke="#46c2c2" stroke-width="0.800"/>
<path d="M1560,230.500 a9,9 0 0 1 8.500,-9" stroke="#9a9a9a" stroke-width="2" fill="none"/>
<rect x="1590" y="218" width="12" height="5" fill="#9a9a9a"/><path d="M1596,223 v3.500 M1590.5,232 v-5.500 h11 v5.500" stroke="#46c2c2" stroke-width="1.200" fill="none"/><rect x="1588.8" y="230.500" width="3.400" height="3.400" fill="#46c2c2"/><rect x="1599.8" y="230.500" width="3.400" height="3.400" fill="#46c2c2"/>
<circle cx="1626" cy="225.500" r="6.300" fill="none" stroke="#46c2c2" stroke-width="0.900" opacity="0.700"/><circle cx="1627.5" cy="225.500" r="6.300" fill="none" stroke="#46c2c2" stroke-width="0.900" opacity="0.800"/><circle cx="1630" cy="225.500" r="6.500" fill="#9a9a9a"/>
<rect x="1652" y="219" width="16" height="9.500" fill="#9a9a9a"/><rect x="1658.8" y="228.500" width="2.400" height="2.500" fill="#9a9a9a"/><rect x="1656" y="231.500" width="8" height="1.400" fill="#9a9a9a"/>
<path d="M1687,220 L1697.5,231.500" stroke="#9a9a9a" stroke-width="3" stroke-linecap="round"/><circle cx="1686.7" cy="219.800" r="3.300" fill="#9a9a9a"/><path d="M1683.5,217 l3.500,3 " stroke="#3b3b3b" stroke-width="2.400"/><circle cx="1697.3" cy="231.300" r="0.900" fill="#3b3b3b"/>
<rect x="1910.500" y="243" width="5" height="678" rx="2.500" fill="#3d3d3d"/>
<rect x="1712.500" y="299" width="5" height="624" rx="2.500" fill="#3d3d3d"/>
<rect x="1522" y="244" width="22.500" height="22.500" rx="3" fill="#5d8ccc"/><circle cx="1533.500" cy="255.500" r="7.600" fill="#dcdcdc" stroke="#2b2b2b" stroke-width="0.900"/>
<circle cx="1554.5" cy="252.5" r="5.300" fill="#d8d8d8"/><rect x="1555" y="253.5" width="9" height="9" fill="#d8d8d8"/><rect x="1555" y="253.5" width="9" height="9" fill="none" stroke="#444" stroke-width="1"/><path d="M1555,257.6 a5.300,5.300 0 0 0 5.200,-4.200" stroke="#444" stroke-width="1" fill="none"/>
<path d="M1580.7,247.2 a5.300,5.300 0 0 1 3,9.600 v1.800 h-6 v-1.800 a5.300,5.300 0 0 1 3,-9.600z" fill="#d8d8d8"/><rect x="1578.1000000000001" y="259.6" width="5.200" height="1.300" fill="#d8d8d8"/><rect x="1578.9" y="261.7" width="3.600" height="1.200" fill="#d8d8d8"/>
<rect x="1597.0" y="250" width="11" height="10" rx="1.300" fill="#d8d8d8"/><path d="M1608.0,255 l4.300,-4.300 v8.600z" fill="#d8d8d8"/>
<path d="M1622.0,247.5 l14,15 h-14z" fill="#d8d8d8"/><path d="M1624.8,255.5 l4.200,4.500 h-4.200z" fill="#444"/><path d="M1622.0,251 h2 M1622.0,254 h2 M1622.0,257 h2 M1622.0,260 h2" stroke="#444" stroke-width="0.800"/>
<path d="M1645.5,251.7 q3.700,-4.200 7.500,-1.200 t7.500,-1.600" stroke="#d8d8d8" stroke-width="1.700" fill="none"/>
<path d="M1645.5,256.2 q3.700,-4.200 7.500,-1.200 t7.500,-1.600" stroke="#d8d8d8" stroke-width="1.700" fill="none"/>
<path d="M1645.5,260.7 q3.700,-4.200 7.500,-1.200 t7.500,-1.600" stroke="#d8d8d8" stroke-width="1.700" fill="none"/>
<polygon points="1677.26,250.45 1677.26,251.55 1676.01,252.00 1675.62,252.67 1675.85,253.98 1674.91,254.53 1673.89,253.67 1673.11,253.67 1672.09,254.53 1671.15,253.98 1671.38,252.67 1670.99,252.00 1669.74,251.55 1669.74,250.45 1670.99,250.00 1671.38,249.33 1671.15,248.02 1672.09,247.47 1673.11,248.33 1673.89,248.33 1674.91,247.47 1675.85,248.02 1675.62,249.33 1676.01,250.00" fill="#d8d8d8"/><circle cx="1673.5" cy="251" r="1.5" fill="#444"/>
<polygon points="1684.47,257.96 1684.47,259.04 1682.96,259.51 1682.66,260.23 1683.40,261.63 1682.63,262.40 1681.23,261.66 1680.51,261.96 1680.04,263.47 1678.96,263.47 1678.49,261.96 1677.77,261.66 1676.37,262.40 1675.60,261.63 1676.34,260.23 1676.04,259.51 1674.53,259.04 1674.53,257.96 1676.04,257.49 1676.34,256.77 1675.60,255.37 1676.37,254.60 1677.77,255.34 1678.49,255.04 1678.96,253.53 1680.04,253.53 1680.51,255.04 1681.23,255.34 1682.63,254.60 1683.40,255.37 1682.66,256.77 1682.96,257.49" fill="#d8d8d8"/><circle cx="1679.5" cy="258.5" r="2.1" fill="#444"/>
<rect x="1521" y="273" width="196" height="20" fill="#666"/><text x="1525.500" y="287.500" font-size="12" fill="#eaeaea" font-family="Liberation Sans,Noto Sans CJK SC,sans-serif">标准基本体</text><path d="M1703.500,281 h7 l-3.500,4.500z" fill="#e0e0e0"/>
<rect x="1521" y="299" width="188" height="167" rx="3" fill="#505050"/>
<path d="M1527,305.500 h6.400 l-3.200,4.200z" fill="#c8c8c8"/><text x="1539.500" y="312.500" font-size="12.600" font-weight="bold" fill="#fff" font-family="Liberation Sans,Noto Sans CJK SC,sans-serif">对象类型</text>
<rect x="1696" y="305" width="1" height="1" fill="#888"/>
<rect x="1696" y="307" width="1" height="1" fill="#888"/>
<rect x="1696" y="309" width="1" height="1" fill="#888"/>
<rect x="1698" y="305" width="1" height="1" fill="#888"/>
<rect x="1698" y="307" width="1" height="1" fill="#888"/>
<rect x="1698" y="309" width="1" height="1" fill="#888"/>
<rect x="1700" y="305" width="1" height="1" fill="#888"/>
<rect x="1700" y="307" width="1" height="1" fill="#888"/>
<rect x="1700" y="309" width="1" height="1" fill="#888"/>
<rect x="1568" y="322" width="10.500" height="10.500" fill="#4a4a4a" stroke="#424242" stroke-width="1"/><text x="1581" y="332.500" font-size="12" fill="#7c7c7c" font-family="Liberation Sans,Noto Sans CJK SC,sans-serif">自动栅格</text>
<rect x="1535" y="339.5" width="78" height="15.500" rx="2.500" fill="#646464"/><text x="1574" y="351.7" font-size="12" text-anchor="middle" fill="#ececec" font-family="Liberation Sans,Noto Sans CJK SC,sans-serif">长方体</text>
<rect x="1618" y="339.5" width="78" height="15.500" rx="2.500" fill="#646464"/><text x="1657" y="351.7" font-size="12" text-anchor="middle" fill="#ececec" font-family="Liberation Sans,Noto Sans CJK SC,sans-serif">圆锥体</text>
<rect x="1535" y="360.4" width="78" height="15.500" rx="2.500" fill="#646464"/><text x="1574" y="372.6" font-size="12" text-anchor="middle" fill="#ececec" font-family="Liberation Sans,Noto Sans CJK SC,sans-serif">球体</text>
<rect x="1618" y="360.4" width="78" height="15.500" rx="2.500" fill="#646464"/><text x="1657" y="372.6" font-size="12" text-anchor="middle" fill="#ececec" font-family="Liberation Sans,Noto Sans CJK SC,sans-serif">几何球体</text>
<rect x="1535" y="381.3" width="78" height="15.500" rx="2.500" fill="#646464"/><text x="1574" y="393.5" font-size="12" text-anchor="middle" fill="#ececec" font-family="Liberation Sans,Noto Sans CJK SC,sans-serif">圆柱体</text>
<rect x="1618" y="381.3" width="78" height="15.500" rx="2.500" fill="#646464"/><text x="1657" y="393.5" font-size="12" text-anchor="middle" fill="#ececec" font-family="Liberation Sans,Noto Sans CJK SC,sans-serif">管状体</text>
<rect x="1535" y="402.2" width="78" height="15.500" rx="2.500" fill="#646464"/><text x="1574" y="414.4" font-size="12" text-anchor="middle" fill="#ececec" font-family="Liberation Sans,Noto Sans CJK SC,sans-serif">圆环</text>
<rect x="1618" y="402.2" width="78" height="15.500" rx="2.500" fill="#646464"/><text x="1657" y="414.4" font-size="12" text-anchor="middle" fill="#ececec" font-family="Liberation Sans,Noto Sans CJK SC,sans-serif">四棱锥</text>
<rect x="1535" y="423.1" width="78" height="15.500" rx="2.500" fill="#646464"/><text x="1574" y="435.3" font-size="12" text-anchor="middle" fill="#ececec" font-family="Liberation Sans,Noto Sans CJK SC,sans-serif">茶壶</text>
<rect x="1618" y="423.1" width="78" height="15.500" rx="2.500" fill="#646464"/><text x="1657" y="435.3" font-size="12" text-anchor="middle" fill="#ececec" font-family="Liberation Sans,Noto Sans CJK SC,sans-serif">平面</text>
<rect x="1535" y="444.0" width="78" height="15.500" rx="2.500" fill="#646464"/><text x="1574" y="456.2" font-size="12" text-anchor="middle" fill="#ececec" font-family="Liberation Sans,Noto Sans CJK SC,sans-serif">加强型文本</text>
<rect x="1521" y="470.500" width="188" height="54.500" rx="3" fill="#505050"/>
<path d="M1527,476.500 h6.400 l-3.200,4.200z" fill="#c8c8c8"/><text x="1539.500" y="483.500" font-size="12.600" font-weight="bold" fill="#fff" font-family="Liberation Sans,Noto Sans CJK SC,sans-serif">名称和颜色</text>
<rect x="1696" y="476" width="1" height="1" fill="#888"/>
<rect x="1696" y="478" width="1" height="1" fill="#888"/>
<rect x="1696" y="480" width="1" height="1" fill="#888"/>
<rect x="1698" y="476" width="1" height="1" fill="#888"/>
<rect x="1698" y="478" width="1" height="1" fill="#888"/>
<rect x="1698" y="480" width="1" height="1" fill="#888"/>
<rect x="1700" y="476" width="1" height="1" fill="#888"/>
<rect x="1700" y="478" width="1" height="1" fill="#888"/>
<rect x="1700" y="480" width="1" height="1" fill="#888"/>
<rect x="1540.500" y="496.500" width="130.500" height="19" fill="#5c5c5c" stroke="#474747" stroke-width="1"/><rect x="1675.500" y="496.500" width="16" height="19.500" fill="#d02f8c" stroke="#2a2a2a" stroke-width="1"/>
<path d="M999.500,989.500 v-4 h4 M1010.500,985.500 h4 v4 M1014.500,996.500 v4 h-4 M1003.500,1000.500 h-4 v-4" fill="none" stroke="#7a7a7a" stroke-width="1.300"/><rect x="1003" y="989" width="8" height="8" fill="none" stroke="#7a7a7a" stroke-width="1.500"/>
<rect x="1028.500" y="992" width="11.500" height="9" rx="1.500" fill="none" stroke="#7a7a7a" stroke-width="1.400"/><path d="M1031,992 v-3 a3.300,3.300 0 0 1 6.600,0 v3" fill="none" stroke="#7a7a7a" stroke-width="1.400"/><circle cx="1034.300" cy="995.500" r="1.300" fill="#7a7a7a"/><rect x="1033.700" y="996" width="1.200" height="3" fill="#7a7a7a"/>
<rect x="1054" y="986" width="14.500" height="14.500" fill="#3a3a3a" stroke="#e8e8e8" stroke-width="1.400"/><circle cx="1061.200" cy="993.200" r="4.200" fill="none" stroke="#e8e8e8" stroke-width="1.800"/><path d="M1061.200,986 v14.500 M1054,993.200 h14.500" stroke="#e8e8e8" stroke-width="1.300"/><circle cx="1061.200" cy="993.200" r="1.800" fill="#3a3a3a"/>
<text x="1077" y="997.500" font-size="11.500" font-weight="bold" fill="#e8e8e8" font-family="Liberation Mono,monospace" letter-spacing="-1.400">X:</text>
<rect x="1092" y="985" width="57.500" height="17.500" fill="#5e5e5e"/><text x="1094.5" y="998" font-size="10.800" fill="#8c8c8c" font-family="Liberation Mono,Noto Sans CJK SC,monospace" letter-spacing="-0.500">22236.939</text>
<text x="1163" y="997.500" font-size="11.500" font-weight="bold" fill="#e8e8e8" font-family="Liberation Mono,monospace" letter-spacing="-1.400">Y:</text>
<rect x="1178" y="985" width="57.500" height="17.500" fill="#5e5e5e"/><text x="1180.5" y="998" font-size="10.800" fill="#8c8c8c" font-family="Liberation Mono,Noto Sans CJK SC,monospace" letter-spacing="-0.500">-26988.52</text>
<text x="1249" y="997.500" font-size="11.500" font-weight="bold" fill="#e8e8e8" font-family="Liberation Mono,monospace" letter-spacing="-1.400">Z:</text>
<rect x="1264" y="985" width="57.500" height="17.500" fill="#5e5e5e"/><text x="1266.5" y="998" font-size="10.800" fill="#8c8c8c" font-family="Liberation Mono,Noto Sans CJK SC,monospace" letter-spacing="-0.500">0.0mm</text>
<text x="1337" y="998" font-size="12" fill="#f2f2f2" font-family="Liberation Mono,Noto Sans CJK SC,monospace">栅格<tspan font-size="11.500" letter-spacing="-0.900" dx="1"> = 10000.0mm</tspan></text>
<rect x="1309" y="1010" width="1.500" height="17" fill="#111"/>
<rect x="1311.500" y="1008" width="21" height="20.500" rx="3" fill="#5d8ccc"/><path d="M1322,1011.500 l6,3 v7 l-6,3.200 l-6,-3.200 v-7z M1316,1014.500 l6,3 l6,-3 M1322,1017.500 v7" fill="none" stroke="#e4ecf8" stroke-width="1.200"/>
<text x="1336" y="1023.500" font-size="12" fill="#f0f0f0" font-family="Liberation Sans,Noto Sans CJK SC,sans-serif">添加时间标记</text>
<rect x="1449.500" y="987.500" width="1.800" height="11" fill="#e4e4e4"/><path d="M1457.500,987.500 v11 l-6,-5.500z M1464.500,987.500 v11 l-6,-5.500z" fill="#e4e4e4"/>
<path d="M1483,987.500 v11 l-7,-5.500z" fill="#e4e4e4"/><rect x="1485" y="987.500" width="1.800" height="11" fill="#e4e4e4"/><rect x="1488.500" y="987.500" width="1.800" height="11" fill="#e4e4e4"/>
<path d="M1499.500,985.500 v15 l11.500,-7.500z" fill="#e4e4e4"/><use href="#fly2" x="1512.500" y="998.500"/>
<rect x="1521.500" y="987.500" width="1.800" height="11" fill="#e4e4e4"/><rect x="1525" y="987.500" width="1.800" height="11" fill="#e4e4e4"/><path d="M1529,987.500 v11 l7,-5.500z" fill="#e4e4e4"/>
<path d="M1547.500,987.500 v11 l6,-5.500z M1554,987.500 v11 l6,-5.500z" fill="#e4e4e4"/><rect x="1560.500" y="987.500" width="1.800" height="11" fill="#e4e4e4"/>
<rect x="1469.8" y="985" width="1.500" height="16" fill="#111"/>
<rect x="1541.3" y="985" width="1.500" height="16" fill="#111"/>
<rect x="1469.8" y="1007" width="1.500" height="16" fill="#111"/>
<rect x="1541.8" y="1007" width="1.500" height="16" fill="#111"/>
<path d="M1456,1010.500 v9 l-5,-4.500z M1458.500,1010.500 v9 l5,-4.500z" fill="#e4e4e4"/>
<rect x="1473" y="1006.500" width="67.500" height="16.500" fill="#5e5e5e"/><text x="1476" y="1019" font-size="11" fill="#e0e0e0" font-family="Liberation Mono,Noto Sans CJK SC,monospace">0</text><path d="M1532.500,1013 l2.500,-3 l2.500,3z M1532.500,1016.500 l2.500,3 l2.500,-3z" fill="#d0d0d0"/>
<circle cx="1553.500" cy="1012.500" r="5" fill="#e8e8e8"/><path d="M1553.500,1009.500 v3 h2.500" stroke="#333" stroke-width="1" fill="none"/>
<polygon points="1563.57,1018.00 1563.57,1019.00 1562.07,1019.40 1561.81,1020.04 1562.58,1021.38 1561.88,1022.08 1560.54,1021.31 1559.90,1021.57 1559.50,1023.07 1558.50,1023.07 1558.10,1021.57 1557.46,1021.31 1556.12,1022.08 1555.42,1021.38 1556.19,1020.04 1555.93,1019.40 1554.43,1019.00 1554.43,1018.00 1555.93,1017.60 1556.19,1016.96 1555.42,1015.62 1556.12,1014.92 1557.46,1015.69 1558.10,1015.43 1558.50,1013.93 1559.50,1013.93 1559.90,1015.43 1560.54,1015.69 1561.88,1014.92 1562.58,1015.62 1561.81,1016.96 1562.07,1017.60" fill="#f2a922"/><circle cx="1559" cy="1018.5" r="1.6" fill="#444"/>
<rect x="1578" y="983" width="40" height="42.500" rx="3" fill="#5a5a5a"/><path d="M1592.500,990.500 h6.500 v8.300 h8.200 v6.500 h-8.200 v8.400 h-6.500 v-8.400 h-8 v-6.500 h8z" fill="#f0f0f0"/>
<path d="M1609.500,1005 L1602,1012.500" stroke="#1f5050" stroke-width="3.600"/><circle cx="1601" cy="1013.500" r="3.200" fill="none" stroke="#1f5050" stroke-width="3.400"/><path d="M1609.500,1005 L1602,1012.500 M1607,1007.500 l2,2 M1609.500,1005 l2,2" stroke="#46c2c2" stroke-width="2"/><circle cx="1601" cy="1013.500" r="3.200" fill="none" stroke="#46c2c2" stroke-width="2"/>
<rect x="1623" y="983" width="65" height="19.500" rx="3" fill="#5a5a5a"/><text x="1625.500" y="997.500" font-size="12.300" fill="#f4f4f4" font-family="Liberation Sans,Noto Sans CJK SC,sans-serif">自动关键点</text>
<rect x="1623" y="1005.500" width="65" height="19.500" rx="3" fill="#5a5a5a"/><text x="1625.500" y="1020" font-size="12.300" fill="#f4f4f4" font-family="Liberation Sans,Noto Sans CJK SC,sans-serif">设置关键点</text>
<rect x="1693" y="983" width="111" height="18.500" fill="#606060"/><text x="1698.500" y="997" font-size="12" fill="#f0f0f0" font-family="Liberation Sans,Noto Sans CJK SC,sans-serif">选定对象</text><path d="M1790.500,990 h7 l-3.500,4.500z" fill="#e0e0e0"/>
<clipPath id="cpK"><rect x="1719" y="1006" width="85" height="20"/></clipPath><rect x="1719" y="1006" width="85" height="20" rx="3" fill="#5a5a5a"/><text x="1715.500" y="1020.500" font-size="12.300" fill="#f4f4f4" font-family="Liberation Sans,Noto Sans CJK SC,sans-serif" clip-path="url(#cpK)">关键点过滤器...</text>
<path d="M1699,1012 q1,8 -2.500,11 M1707,1012 q-1,8 2.500,11" stroke="#46c2c2" stroke-width="1.800" fill="none"/><path d="M1697,1010.500 h3.500 M1705.500,1010.500 h3.500 M1701.500,1009.500 h3" stroke="#f0f0f0" stroke-width="1.800"/><use href="#fly2" x="1710.500" y="1021.500"/>
<circle cx="1830.5" cy="990.5" r="4.8" fill="none" stroke="#e8e8e8" stroke-width="1.8"/><path d="M1827.14,993.86 l-4.32,4.32" stroke="#e8e8e8" stroke-width="2.4" stroke-linecap="round"/>
<circle cx="1851" cy="994" r="3.6" fill="none" stroke="#e8e8e8" stroke-width="1.5"/><path d="M1848.48,996.52 l-3.24,3.24" stroke="#e8e8e8" stroke-width="2.1" stroke-linecap="round"/><rect x="1851.500" y="985.500" width="4.500" height="4.500" fill="#46c2c2"/><rect x="1857" y="985.500" width="4.500" height="4.500" fill="#46c2c2"/><rect x="1857" y="991" width="4.500" height="4.500" fill="#46c2c2"/>
<path d="M1868.500,989.500 v-3.500 h3.500 M1879,986 h3.500 v3.500 M1882.500,996 v3.500 h-3.500 M1872,999.500 h-3.500 v-3.500" fill="none" stroke="#e8e8e8" stroke-width="1.400"/><path d="M1875.500,988 l4.500,2 v5 l-4.500,2.300 l-4.500,-2.300 v-5z" fill="#46c2c2" stroke="#1f5050" stroke-width="0.600"/><path d="M1871,990 l4.500,2 l4.500,-2 M1875.500,992 v5" stroke="#1f5050" stroke-width="0.600" fill="none"/><use href="#fly2" x="1882" y="1000"/>
<path d="M1899.500,985 l3.500,1.800 v8 l-3.500,2 l-3.500,-2 v-8z" fill="#46c2c2" stroke="#1f5050" stroke-width="0.600"/><path d="M1890,994.500 l3.500,-2.500 l3,1.500 l-3.500,2.500z M1893.500,998 l3.500,-2.500 l3,1.500 l-3.500,2.500z" fill="#e0e0e0"/><use href="#fly2" x="1905" y="1000"/>
<rect x="1822" y="1007.500" width="14" height="10" fill="none" stroke="#e8e8e8" stroke-width="1.300" stroke-dasharray="2.500 1.500"/><circle cx="1830" cy="1015" r="3.4" fill="none" stroke="#46c2c2" stroke-width="1.6"/><path d="M1827.62,1017.38 l-3.06,3.06" stroke="#46c2c2" stroke-width="2.2" stroke-linecap="round"/>
<path d="M1847.500,1014 v-5 q0,-1.200 1.100,-1.200 t1.100,1.200 v-2 q0,-1.200 1.100,-1.200 t1.100,1.200 v0.500 q0,-1.200 1.100,-1.200 t1.100,1.200 v1.300 q0,-1.200 1.100,-1.200 t1.100,1.200 v8 q0,5 -4.500,5 q-3,0 -4.500,-2.500 l-3,-5 q-0.500,-1.500 0.800,-1.800 q1,0 1.700,1z" fill="#e8e8e8"/><use href="#fly2" x="1858.500" y="1021.500"/>
<circle cx="1875" cy="1013" r="5.300" fill="#46c2c2"/><path d="M1875,1007.700 a5.300,5.300 0 0 1 5.300,5.300 h-5.300z" fill="#e0e0e0"/><ellipse cx="1874.500" cy="1015.500" rx="9" ry="3.300" fill="none" stroke="#e0e0e0" stroke-width="1.300" transform="rotate(-25 1874.500 1015.500)"/><use href="#fly2" x="1882" y="1021.500"/>
<rect x="1892" y="1008.500" width="13" height="13" fill="none" stroke="#f0f0f0" stroke-width="1.600"/><rect x="1892" y="1015.500" width="6.500" height="6" fill="#f0f0f0"/><path d="M1897.500,1016 l6,-6 M1899.500,1009.500 h4.500 v4.500" stroke="#f0f0f0" stroke-width="1.500" fill="none"/>
<ellipse cx="1455.800" cy="277.500" rx="32" ry="13.600" fill="#2d2d2d" stroke="#858a8f" stroke-width="7.500"/>
<ellipse cx="1455.800" cy="276.500" rx="28.500" ry="11" fill="none" stroke="#555a5e" stroke-width="1"/>
<path d="M1437,244.200 L1456,240.800 L1463,241 L1475,248 L1474.200,274.200 L1449.200,280 L1438,268.800z" fill="#8b8b8b"/>
<path d="M1437,244.200 L1456,240.800 L1463,241 L1475,248 L1450,253.500z" fill="#8f8f8f"/>
<path d="M1437,244.200 L1450,253.500 L1449.200,280 L1438,268.800z" fill="#878787"/>
<rect x="1446" y="251.500" width="8" height="6" rx="1" fill="#8e96a0"/>
<text x="1456" y="270" font-size="9" fill="#6e747c" font-family="Liberation Sans,Noto Sans CJK SC,sans-serif" transform="rotate(-13 1460 266)">前</text>
<g font-size="6.500" fill="#a8acb0" font-family="Liberation Sans,Noto Sans CJK SC,sans-serif"><text x="1416.500" y="285">西</text><text x="1469" y="294">南</text><text x="1483" y="270.500">东</text></g>
</svg>
</body></html>
